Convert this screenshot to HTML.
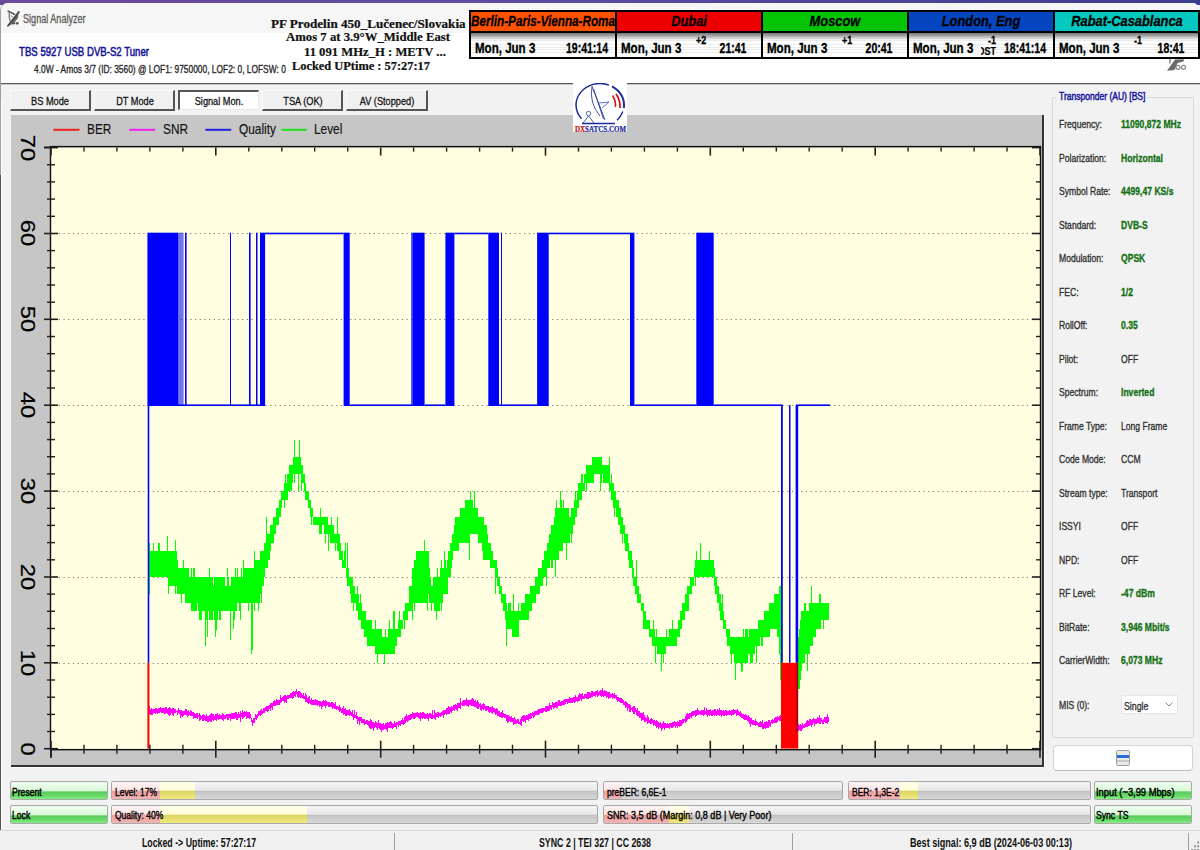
<!DOCTYPE html><html><head><meta charset="utf-8"><style>
html,body{margin:0;padding:0;width:1200px;height:850px;overflow:hidden;background:#f2f2f2;}
body{position:relative;font-family:"Liberation Sans",sans-serif;}
.t{position:absolute;white-space:nowrap;transform-origin:0 0;line-height:1;}
.a{position:absolute;}
</style></head><body>
<div class="a" style="left:0;top:0;width:1200px;height:5px;background:linear-gradient(90deg,#6c4a9a 0%,#5a4aa0 50%,#3c3c8e 100%)"></div>
<div class="a" style="left:0;top:3px;width:1200px;height:847px;background:#f2f2f2;border-top-left-radius:8px;border-top-right-radius:8px;overflow:hidden;border-left:1px solid #a0a0a0;box-sizing:border-box">
<div class="a" style="left:0;top:0;width:1200px;height:30px;background:#f6f6f6"></div>
<div class="a" style="left:0;top:30px;width:1200px;height:50px;background:#ffffff"></div>
<div class="a" style="left:0;top:80px;width:1200px;height:1px;background:#5a5a5a"></div>
<div class="a" style="left:0;top:81px;width:1200px;height:1px;background:#c8c8c8"></div>
</div>
<div class="a" style="left:0;top:175px;width:1px;height:675px;background:#505050"></div>
<div class="a" style="left:1px;top:100px;width:1px;height:750px;background:#ffffff"></div>
<svg class="a" style="left:4px;top:7px" width="20" height="22" viewBox="0 0 20 22">
<path d="M4.2 4.2 L10.5 7.2" stroke="#555" stroke-width="1.6" fill="none" stroke-linecap="round"/>
<path d="M5.2 6 Q5 10 6 14" stroke="#777" stroke-width="1.3" fill="none"/>
<path d="M7 8.5 L9 10.5" stroke="#666" stroke-width="1" fill="none"/>
<path d="M4.5 18.5 L14.8 5.2 L14 11 L9.5 17 Z" fill="#6a6a6a"/>
<path d="M4 18.8 L14.8 5" stroke="#444" stroke-width="1.8" fill="none" stroke-linecap="round"/>
<circle cx="9.8" cy="16.3" r="1.3" fill="#555"/>
<circle cx="13.2" cy="16.3" r="1.4" fill="#555"/>
</svg>
<div class="t" style="left:23px;top:12.5px;font-size:12px;color:#5f5f5f;font-weight:normal;font-style:normal;font-family:'Liberation Sans', sans-serif;transform:scaleX(0.757);-webkit-text-stroke:0.33px #5f5f5f;">Signal Analyzer</div>
<div class="t" style="left:18.5px;top:46.3px;font-size:12.5px;color:#14149a;font-weight:normal;font-style:normal;font-family:'Liberation Sans', sans-serif;transform:scaleX(0.77);-webkit-text-stroke:0.55px #14149a;">TBS 5927 USB DVB-S2 Tuner</div>
<div class="t" style="left:33.5px;top:63.5px;font-size:11.2px;color:#2a2a2a;font-weight:normal;font-style:normal;font-family:'Liberation Sans', sans-serif;transform:scaleX(0.75);-webkit-text-stroke:0.35px #2a2a2a;">4.0W - Amos 3/7 (ID: 3560) @ LOF1: 9750000, LOF2: 0, LOFSW: 0</div>
<div class="t" style="left:271.3px;top:18.7px;font-size:11.8px;font-weight:bold;font-family:'Liberation Serif', serif;color:#111;-webkit-text-stroke:0.2px #111;transform:scaleX(1.112)">PF Prodelin 450_Lučenec/Slovakia</div>
<div class="t" style="left:286.2px;top:32.4px;font-size:11.8px;font-weight:bold;font-family:'Liberation Serif', serif;color:#111;-webkit-text-stroke:0.2px #111;transform:scaleX(1.08)">Amos 7 at 3.9°W_Middle East</div>
<div class="t" style="left:303.5px;top:46.5px;font-size:11.8px;font-weight:bold;font-family:'Liberation Serif', serif;color:#111;-webkit-text-stroke:0.2px #111;transform:scaleX(1.073)">11 091 MHz_H : METV ...</div>
<div class="t" style="left:291.5px;top:60.8px;font-size:11.8px;font-weight:bold;font-family:'Liberation Serif', serif;color:#111;-webkit-text-stroke:0.2px #111;transform:scaleX(1.05)">Locked UPtime : 57:27:17</div>
<div class="a" style="left:469px;top:10px;width:731px;height:49px;background:#000"></div>
<div class="a" style="left:470.5px;top:12.3px;width:144px;height:19px;background:#ff5200"></div>
<div class="a" style="left:470.5px;top:33.3px;width:144px;height:24px;background:linear-gradient(#767676 0%,#a8a8a8 12%,#e8e8e8 26%,rgba(255,255,255,0) 32%),repeating-linear-gradient(#ffffff 0px,#ffffff 1.5px,#ebebeb 1.5px,#ebebeb 2.5px) 0 10px"></div>
<div class="t" style="left:543px;top:12.6px;font-size:15.5px;font-weight:bold;font-style:italic;color:#000;-webkit-text-stroke:0.3px #000;transform:translateX(-50%) scaleX(0.755);transform-origin:50% 0">Berlin-Paris-Vienna-Roma</div>
<div class="t" style="left:474.5px;top:39.8px;font-size:15.5px;font-weight:bold;color:#000;-webkit-text-stroke:0.35px #000;transform:scaleX(0.745)">Mon, Jun 3</div>
<div class="t" style="left:587px;top:39.8px;font-size:15.5px;font-weight:bold;color:#000;-webkit-text-stroke:0.35px #000;transform:translateX(-50%) scaleX(0.68);transform-origin:50% 0">19:41:14</div>
<div class="a" style="left:616.5px;top:12.3px;width:144px;height:19px;background:#ee0000"></div>
<div class="a" style="left:616.5px;top:33.3px;width:144px;height:24px;background:linear-gradient(#767676 0%,#a8a8a8 12%,#e8e8e8 26%,rgba(255,255,255,0) 32%),repeating-linear-gradient(#ffffff 0px,#ffffff 1.5px,#ebebeb 1.5px,#ebebeb 2.5px) 0 10px"></div>
<div class="t" style="left:689px;top:12.6px;font-size:15.5px;font-weight:bold;font-style:italic;color:#000;-webkit-text-stroke:0.3px #000;transform:translateX(-50%) scaleX(0.83);transform-origin:50% 0">Dubai</div>
<div class="t" style="left:620.5px;top:39.8px;font-size:15.5px;font-weight:bold;color:#000;-webkit-text-stroke:0.35px #000;transform:scaleX(0.745)">Mon, Jun 3</div>
<div class="t" style="left:733px;top:39.8px;font-size:15.5px;font-weight:bold;color:#000;-webkit-text-stroke:0.35px #000;transform:translateX(-50%) scaleX(0.68);transform-origin:50% 0">21:41</div>
<div class="t" style="left:695.5px;top:34.8px;font-size:11.5px;font-weight:bold;color:#000;-webkit-text-stroke:0.3px #000;transform:scaleX(0.78)">+2</div>
<div class="a" style="left:762.5px;top:12.3px;width:144px;height:19px;background:#05c405"></div>
<div class="a" style="left:762.5px;top:33.3px;width:144px;height:24px;background:linear-gradient(#767676 0%,#a8a8a8 12%,#e8e8e8 26%,rgba(255,255,255,0) 32%),repeating-linear-gradient(#ffffff 0px,#ffffff 1.5px,#ebebeb 1.5px,#ebebeb 2.5px) 0 10px"></div>
<div class="t" style="left:835px;top:12.6px;font-size:15.5px;font-weight:bold;font-style:italic;color:#000;-webkit-text-stroke:0.3px #000;transform:translateX(-50%) scaleX(0.83);transform-origin:50% 0">Moscow</div>
<div class="t" style="left:766.5px;top:39.8px;font-size:15.5px;font-weight:bold;color:#000;-webkit-text-stroke:0.35px #000;transform:scaleX(0.745)">Mon, Jun 3</div>
<div class="t" style="left:879px;top:39.8px;font-size:15.5px;font-weight:bold;color:#000;-webkit-text-stroke:0.35px #000;transform:translateX(-50%) scaleX(0.68);transform-origin:50% 0">20:41</div>
<div class="t" style="left:841.5px;top:34.8px;font-size:11.5px;font-weight:bold;color:#000;-webkit-text-stroke:0.3px #000;transform:scaleX(0.78)">+1</div>
<div class="a" style="left:908.5px;top:12.3px;width:144px;height:19px;background:#0545c0"></div>
<div class="a" style="left:908.5px;top:33.3px;width:144px;height:24px;background:linear-gradient(#767676 0%,#a8a8a8 12%,#e8e8e8 26%,rgba(255,255,255,0) 32%),repeating-linear-gradient(#ffffff 0px,#ffffff 1.5px,#ebebeb 1.5px,#ebebeb 2.5px) 0 10px"></div>
<div class="t" style="left:981px;top:12.6px;font-size:15.5px;font-weight:bold;font-style:italic;color:#000;-webkit-text-stroke:0.3px #000;transform:translateX(-50%) scaleX(0.83);transform-origin:50% 0">London, Eng</div>
<div class="t" style="left:912.5px;top:39.8px;font-size:15.5px;font-weight:bold;color:#000;-webkit-text-stroke:0.35px #000;transform:scaleX(0.745)">Mon, Jun 3</div>
<div class="t" style="left:1025px;top:39.8px;font-size:15.5px;font-weight:bold;color:#000;-webkit-text-stroke:0.35px #000;transform:translateX(-50%) scaleX(0.68);transform-origin:50% 0">18:41:14</div>
<div class="t" style="left:987.5px;top:34.8px;font-size:11.5px;font-weight:bold;color:#000;-webkit-text-stroke:0.3px #000;transform:scaleX(0.78)">-1</div>
<div class="a" style="left:1054.5px;top:12.3px;width:143px;height:19px;background:#05c8c0"></div>
<div class="a" style="left:1054.5px;top:33.3px;width:143px;height:24px;background:linear-gradient(#767676 0%,#a8a8a8 12%,#e8e8e8 26%,rgba(255,255,255,0) 32%),repeating-linear-gradient(#ffffff 0px,#ffffff 1.5px,#ebebeb 1.5px,#ebebeb 2.5px) 0 10px"></div>
<div class="t" style="left:1127px;top:12.6px;font-size:15.5px;font-weight:bold;font-style:italic;color:#000;-webkit-text-stroke:0.3px #000;transform:translateX(-50%) scaleX(0.83);transform-origin:50% 0">Rabat-Casablanca</div>
<div class="t" style="left:1058.5px;top:39.8px;font-size:15.5px;font-weight:bold;color:#000;-webkit-text-stroke:0.35px #000;transform:scaleX(0.745)">Mon, Jun 3</div>
<div class="t" style="left:1171px;top:39.8px;font-size:15.5px;font-weight:bold;color:#000;-webkit-text-stroke:0.35px #000;transform:translateX(-50%) scaleX(0.68);transform-origin:50% 0">18:41</div>
<div class="t" style="left:1133.5px;top:34.8px;font-size:11.5px;font-weight:bold;color:#000;-webkit-text-stroke:0.3px #000;transform:scaleX(0.78)">-1</div>
<div class="t" style="left:978px;top:45.8px;font-size:10.5px;font-weight:bold;color:#000;-webkit-text-stroke:0.2px #000;transform:scaleX(0.85)">DST</div>
<div class="a" style="left:975px;top:45px;width:5.5px;height:11px;background:#f8f8f8"></div>
<svg class="a" style="left:1160px;top:55px" width="35" height="20" viewBox="0 0 35 20">
<path d="M7 15.7 L15 4.5 L24 4.3 L23.5 6.5 L17.5 8 L14.5 15 Z" fill="#6a6a6a"/>
<circle cx="18" cy="12.3" r="2" fill="none" stroke="#8a8a8a" stroke-width="1.2"/>
<circle cx="23.5" cy="12.3" r="2" fill="none" stroke="#8a8a8a" stroke-width="1.2"/>
<line x1="10" y1="3.5" x2="10" y2="8.5" stroke="#666" stroke-width="1.2"/>
</svg>
<div class="a" style="left:9.5px;top:90px;width:81px;height:21px;background:#f0f0f0;box-sizing:border-box;border-top:1px solid #fafafa;border-left:1px solid #fafafa;border-right:2px solid #555;border-bottom:2px solid #555"></div>
<div class="t" style="left:50.0px;top:96.3px;font-size:11.8px;color:#111;-webkit-text-stroke:0.3px #111;transform:translateX(-50%) scaleX(0.78);transform-origin:50% 0">BS Mode</div>
<div class="a" style="left:94px;top:90px;width:81px;height:21px;background:#f0f0f0;box-sizing:border-box;border-top:1px solid #fafafa;border-left:1px solid #fafafa;border-right:2px solid #555;border-bottom:2px solid #555"></div>
<div class="t" style="left:134.5px;top:96.3px;font-size:11.8px;color:#111;-webkit-text-stroke:0.3px #111;transform:translateX(-50%) scaleX(0.78);transform-origin:50% 0">DT Mode</div>
<div class="a" style="left:178px;top:90px;width:81px;height:20px;background:#fff;box-sizing:border-box;border-top:2px solid #555;border-left:2px solid #555;border-right:1px solid #e8e8e8;border-bottom:1px solid #e8e8e8"></div>
<div class="t" style="left:218.5px;top:96.3px;font-size:11.8px;color:#111;-webkit-text-stroke:0.3px #111;transform:translateX(-50%) scaleX(0.78);transform-origin:50% 0">Signal Mon.</div>
<div class="a" style="left:262px;top:90px;width:81px;height:21px;background:#f0f0f0;box-sizing:border-box;border-top:1px solid #fafafa;border-left:1px solid #fafafa;border-right:2px solid #555;border-bottom:2px solid #555"></div>
<div class="t" style="left:302.5px;top:96.3px;font-size:11.8px;color:#111;-webkit-text-stroke:0.3px #111;transform:translateX(-50%) scaleX(0.78);transform-origin:50% 0">TSA (OK)</div>
<div class="a" style="left:346px;top:90px;width:82px;height:21px;background:#f0f0f0;box-sizing:border-box;border-top:1px solid #fafafa;border-left:1px solid #fafafa;border-right:2px solid #555;border-bottom:2px solid #555"></div>
<div class="t" style="left:387.0px;top:96.3px;font-size:11.8px;color:#111;-webkit-text-stroke:0.3px #111;transform:translateX(-50%) scaleX(0.78);transform-origin:50% 0">AV (Stopped)</div>
<div class="a" style="left:11px;top:115px;width:1033px;height:652px;background:#c6c6c6;box-sizing:border-box;border-right:2px solid #333;border-bottom:2px solid #333"></div>
<div class="a" style="left:1044px;top:115px;width:1px;height:653px;background:#fff"></div>
<div class="a" style="left:11px;top:767px;width:1034px;height:1px;background:#fff"></div>
<svg class="a" style="left:0;top:0" width="1200" height="850" viewBox="0 0 1200 850">
<rect x="51" y="147.6" width="989" height="601.1" fill="#fffee0"/>
<line x1="54" y1="663.5" x2="1040" y2="663.5" stroke="#7a7a70" stroke-width="1.1" stroke-dasharray="1.2 3.5"/>
<line x1="54" y1="577.5" x2="1040" y2="577.5" stroke="#7a7a70" stroke-width="1.1" stroke-dasharray="1.2 3.5"/>
<line x1="54" y1="491.5" x2="1040" y2="491.5" stroke="#7a7a70" stroke-width="1.1" stroke-dasharray="1.2 3.5"/>
<line x1="54" y1="405.5" x2="1040" y2="405.5" stroke="#7a7a70" stroke-width="1.1" stroke-dasharray="1.2 3.5"/>
<line x1="54" y1="319.5" x2="1040" y2="319.5" stroke="#7a7a70" stroke-width="1.1" stroke-dasharray="1.2 3.5"/>
<line x1="54" y1="233.5" x2="1040" y2="233.5" stroke="#7a7a70" stroke-width="1.1" stroke-dasharray="1.2 3.5"/>
<line x1="53.5" y1="129.8" x2="79.5" y2="129.8" stroke="#ee2020" stroke-width="2"/>
<line x1="129.3" y1="129.8" x2="155.2" y2="129.8" stroke="#f020f0" stroke-width="2"/>
<line x1="205.3" y1="129.8" x2="231.2" y2="129.8" stroke="#2020e0" stroke-width="2"/>
<line x1="281.3" y1="129.8" x2="306.7" y2="129.8" stroke="#20e020" stroke-width="2"/>
</svg>
<div class="t" style="left:86.7px;top:121.2px;font-size:15px;color:#111;font-weight:normal;font-style:normal;font-family:'Liberation Sans', sans-serif;transform:scaleX(0.79);-webkit-text-stroke:0.15px #111;">BER</div>
<div class="t" style="left:162.7px;top:121.2px;font-size:15px;color:#111;font-weight:normal;font-style:normal;font-family:'Liberation Sans', sans-serif;transform:scaleX(0.79);-webkit-text-stroke:0.15px #111;">SNR</div>
<div class="t" style="left:238.7px;top:121.2px;font-size:15px;color:#111;font-weight:normal;font-style:normal;font-family:'Liberation Sans', sans-serif;transform:scaleX(0.79);-webkit-text-stroke:0.15px #111;">Quality</div>
<div class="t" style="left:314px;top:121.2px;font-size:15px;color:#111;font-weight:normal;font-style:normal;font-family:'Liberation Sans', sans-serif;transform:scaleX(0.79);-webkit-text-stroke:0.15px #111;">Level</div>
<div class="t" style="left:27.2px;top:748.7px;font-size:19.5px;line-height:19.5px;color:#000;-webkit-text-stroke:0.2px #000;transform:translate(-50%,-50%) rotate(90deg) scaleX(1.22);transform-origin:50% 50%">0</div>
<div class="t" style="left:27.2px;top:662.8285714285714px;font-size:19.5px;line-height:19.5px;color:#000;-webkit-text-stroke:0.2px #000;transform:translate(-50%,-50%) rotate(90deg) scaleX(1.22);transform-origin:50% 50%">10</div>
<div class="t" style="left:27.2px;top:576.9571428571429px;font-size:19.5px;line-height:19.5px;color:#000;-webkit-text-stroke:0.2px #000;transform:translate(-50%,-50%) rotate(90deg) scaleX(1.22);transform-origin:50% 50%">20</div>
<div class="t" style="left:27.2px;top:491.08571428571435px;font-size:19.5px;line-height:19.5px;color:#000;-webkit-text-stroke:0.2px #000;transform:translate(-50%,-50%) rotate(90deg) scaleX(1.22);transform-origin:50% 50%">30</div>
<div class="t" style="left:27.2px;top:405.2142857142858px;font-size:19.5px;line-height:19.5px;color:#000;-webkit-text-stroke:0.2px #000;transform:translate(-50%,-50%) rotate(90deg) scaleX(1.22);transform-origin:50% 50%">40</div>
<div class="t" style="left:27.2px;top:319.3428571428572px;font-size:19.5px;line-height:19.5px;color:#000;-webkit-text-stroke:0.2px #000;transform:translate(-50%,-50%) rotate(90deg) scaleX(1.22);transform-origin:50% 50%">50</div>
<div class="t" style="left:27.2px;top:233.47142857142865px;font-size:19.5px;line-height:19.5px;color:#000;-webkit-text-stroke:0.2px #000;transform:translate(-50%,-50%) rotate(90deg) scaleX(1.22);transform-origin:50% 50%">60</div>
<div class="t" style="left:27.2px;top:147.60000000000002px;font-size:19.5px;line-height:19.5px;color:#000;-webkit-text-stroke:0.2px #000;transform:translate(-50%,-50%) rotate(90deg) scaleX(1.22);transform-origin:50% 50%">70</div>
<svg class="a" style="left:0;top:0" width="1200" height="850" viewBox="0 0 1200 850">
<clipPath id="pc"><rect x="52" y="148.6" width="988" height="600.1"/></clipPath><g clip-path="url(#pc)">
<path d="M148.5 551.2V577.0 M148.5 551.2V542.6 M149.5 551.2V577.0 M149.5 551.2V542.6 M149.5 577.0V594.1 M150.5 551.2V577.0 M151.5 551.2V577.0 M152.5 551.2V577.0 M153.5 551.2V577.0 M153.5 551.2V542.6 M154.5 551.2V577.0 M155.5 551.2V577.0 M156.5 551.2V577.0 M157.5 551.2V577.0 M158.5 542.6V577.0 M159.5 542.6V577.0 M160.5 551.2V577.0 M161.5 551.2V577.0 M162.5 551.2V577.0 M163.5 551.2V577.0 M164.5 551.2V577.0 M165.5 551.2V577.0 M166.5 551.2V577.0 M167.5 551.2V577.0 M168.5 551.2V577.0 M168.5 577.0V594.1 M169.5 551.2V585.5 M170.5 551.2V585.5 M171.5 551.2V585.5 M172.5 551.2V585.5 M173.5 551.2V585.5 M174.5 551.2V585.5 M175.5 551.2V585.5 M175.5 585.5V594.1 M176.5 551.2V585.5 M177.5 559.8V594.1 M178.5 568.4V594.1 M179.5 568.4V594.1 M180.5 568.4V594.1 M181.5 568.4V594.1 M181.5 594.1V602.7 M182.5 568.4V594.1 M183.5 568.4V594.1 M183.5 568.4V559.8 M184.5 568.4V594.1 M185.5 568.4V602.7 M186.5 568.4V602.7 M187.5 568.4V602.7 M188.5 568.4V602.7 M189.5 577.0V602.7 M190.5 577.0V602.7 M191.5 577.0V611.3 M191.5 577.0V568.4 M192.5 577.0V611.3 M193.5 568.4V611.3 M194.5 568.4V611.3 M195.5 577.0V611.3 M196.5 577.0V611.3 M197.5 577.0V602.7 M198.5 577.0V611.3 M199.5 577.0V619.9 M200.5 577.0V619.9 M201.5 577.0V619.9 M202.5 577.0V611.3 M203.5 577.0V611.3 M204.5 577.0V611.3 M205.5 577.0V619.9 M206.5 577.0V619.9 M207.5 577.0V619.9 M207.5 619.9V637.1 M208.5 577.0V611.3 M209.5 577.0V619.9 M209.5 577.0V568.4 M210.5 577.0V619.9 M211.5 577.0V619.9 M212.5 577.0V619.9 M213.5 585.5V611.3 M214.5 577.0V619.9 M215.5 577.0V619.9 M215.5 619.9V637.1 M216.5 577.0V619.9 M217.5 577.0V619.9 M218.5 577.0V611.3 M219.5 577.0V611.3 M219.5 611.3V619.9 M220.5 577.0V611.3 M220.5 611.3V619.9 M221.5 577.0V611.3 M222.5 577.0V611.3 M223.5 577.0V611.3 M224.5 577.0V611.3 M225.5 585.5V611.3 M226.5 585.5V611.3 M227.5 577.0V611.3 M227.5 577.0V568.4 M228.5 577.0V611.3 M229.5 585.5V611.3 M230.5 585.5V611.3 M231.5 577.0V611.3 M232.5 577.0V611.3 M233.5 577.0V611.3 M233.5 611.3V628.5 M234.5 577.0V611.3 M234.5 611.3V619.9 M235.5 577.0V611.3 M235.5 577.0V568.4 M236.5 577.0V611.3 M237.5 577.0V602.7 M237.5 577.0V568.4 M238.5 577.0V602.7 M239.5 577.0V611.3 M240.5 577.0V611.3 M240.5 611.3V619.9 M241.5 577.0V602.7 M241.5 577.0V568.4 M242.5 577.0V602.7 M243.5 577.0V602.7 M243.5 577.0V559.8 M244.5 568.4V602.7 M245.5 568.4V602.7 M246.5 568.4V602.7 M247.5 568.4V602.7 M248.5 568.4V602.7 M248.5 602.7V611.3 M249.5 568.4V602.7 M250.5 568.4V602.7 M251.5 568.4V602.7 M252.5 568.4V602.7 M253.5 568.4V602.7 M254.5 559.8V602.7 M254.5 559.8V551.2 M254.5 602.7V611.3 M255.5 559.8V602.7 M256.5 559.8V602.7 M257.5 559.8V602.7 M258.5 559.8V611.3 M259.5 559.8V602.7 M260.5 551.2V594.1 M261.5 551.2V594.1 M261.5 594.1V602.7 M262.5 551.2V585.5 M263.5 551.2V585.5 M264.5 542.6V577.0 M265.5 542.6V568.4 M266.5 534.0V568.4 M266.5 534.0V516.8 M267.5 534.0V568.4 M268.5 534.0V559.8 M269.5 534.0V559.8 M270.5 525.4V551.2 M271.5 525.4V542.6 M272.5 525.4V542.6 M273.5 516.8V542.6 M274.5 516.8V534.0 M275.5 516.8V534.0 M276.5 508.3V525.4 M277.5 508.3V525.4 M278.5 508.3V525.4 M279.5 499.7V516.8 M280.5 499.7V516.8 M281.5 491.1V508.3 M282.5 491.1V499.7 M283.5 491.1V499.7 M284.5 482.5V508.3 M285.5 473.9V499.7 M286.5 482.5V499.7 M287.5 473.9V499.7 M288.5 473.9V491.1 M289.5 465.3V491.1 M290.5 465.3V491.1 M291.5 465.3V482.5 M291.5 482.5V491.1 M292.5 465.3V482.5 M293.5 456.7V473.9 M294.5 456.7V482.5 M294.5 456.7V439.6 M295.5 456.7V473.9 M296.5 456.7V473.9 M297.5 456.7V473.9 M298.5 456.7V473.9 M298.5 473.9V491.1 M299.5 456.7V473.9 M299.5 456.7V439.6 M300.5 456.7V473.9 M301.5 465.3V482.5 M301.5 482.5V491.1 M302.5 465.3V482.5 M303.5 473.9V482.5 M304.5 473.9V491.1 M305.5 482.5V499.7 M306.5 491.1V499.7 M307.5 491.1V499.7 M308.5 491.1V508.3 M309.5 499.7V508.3 M310.5 499.7V516.8 M311.5 508.3V525.4 M312.5 508.3V516.8 M313.5 516.8V525.4 M314.5 516.8V525.4 M315.5 516.8V525.4 M316.5 516.8V525.4 M317.5 516.8V525.4 M318.5 516.8V525.4 M319.5 516.8V534.0 M320.5 516.8V534.0 M320.5 516.8V508.3 M321.5 516.8V534.0 M322.5 516.8V525.4 M323.5 516.8V525.4 M324.5 516.8V534.0 M325.5 516.8V534.0 M325.5 534.0V542.6 M326.5 516.8V534.0 M327.5 516.8V534.0 M328.5 525.4V534.0 M328.5 534.0V551.2 M329.5 525.4V534.0 M330.5 525.4V542.6 M331.5 525.4V542.6 M331.5 525.4V516.8 M332.5 525.4V542.6 M333.5 525.4V542.6 M334.5 534.0V542.6 M335.5 534.0V551.2 M336.5 534.0V542.6 M337.5 534.0V551.2 M337.5 534.0V516.8 M338.5 534.0V551.2 M339.5 534.0V551.2 M339.5 551.2V559.8 M340.5 542.6V559.8 M341.5 551.2V559.8 M342.5 551.2V559.8 M342.5 559.8V568.4 M343.5 559.8V568.4 M344.5 551.2V568.4 M345.5 559.8V568.4 M345.5 559.8V542.6 M346.5 568.4V577.0 M347.5 559.8V585.5 M347.5 559.8V542.6 M348.5 568.4V585.5 M349.5 577.0V585.5 M350.5 577.0V594.1 M351.5 577.0V594.1 M351.5 594.1V602.7 M352.5 577.0V602.7 M353.5 585.5V602.7 M353.5 602.7V611.3 M354.5 585.5V602.7 M355.5 594.1V602.7 M356.5 594.1V611.3 M357.5 594.1V611.3 M357.5 594.1V585.5 M358.5 594.1V619.9 M359.5 602.7V619.9 M360.5 602.7V619.9 M360.5 602.7V594.1 M361.5 602.7V628.5 M362.5 611.3V628.5 M363.5 611.3V628.5 M364.5 611.3V637.1 M365.5 611.3V637.1 M366.5 619.9V637.1 M367.5 619.9V645.7 M368.5 619.9V645.7 M369.5 619.9V645.7 M370.5 619.9V645.7 M371.5 619.9V645.7 M372.5 628.5V645.7 M373.5 628.5V645.7 M374.5 628.5V645.7 M375.5 619.9V654.2 M376.5 628.5V654.2 M377.5 628.5V654.2 M377.5 654.2V662.8 M378.5 628.5V654.2 M379.5 628.5V654.2 M380.5 628.5V654.2 M381.5 628.5V654.2 M382.5 637.1V654.2 M383.5 637.1V654.2 M384.5 637.1V654.2 M385.5 637.1V654.2 M385.5 637.1V628.5 M386.5 637.1V654.2 M387.5 637.1V654.2 M388.5 628.5V654.2 M389.5 628.5V654.2 M389.5 628.5V619.9 M390.5 628.5V654.2 M391.5 628.5V654.2 M392.5 628.5V654.2 M393.5 628.5V654.2 M393.5 628.5V611.3 M394.5 628.5V654.2 M394.5 628.5V611.3 M395.5 628.5V645.7 M396.5 628.5V645.7 M397.5 628.5V637.1 M398.5 619.9V637.1 M399.5 619.9V637.1 M399.5 619.9V611.3 M400.5 619.9V637.1 M401.5 619.9V628.5 M402.5 619.9V628.5 M403.5 611.3V619.9 M404.5 611.3V628.5 M405.5 602.7V619.9 M406.5 602.7V619.9 M407.5 602.7V611.3 M407.5 611.3V619.9 M408.5 602.7V611.3 M409.5 594.1V611.3 M409.5 594.1V585.5 M410.5 585.5V611.3 M411.5 585.5V611.3 M412.5 568.4V611.3 M412.5 611.3V619.9 M413.5 568.4V602.7 M414.5 559.8V611.3 M415.5 559.8V602.7 M416.5 551.2V602.7 M417.5 551.2V602.7 M418.5 551.2V602.7 M419.5 551.2V602.7 M420.5 551.2V602.7 M421.5 551.2V602.7 M422.5 551.2V602.7 M423.5 551.2V602.7 M424.5 551.2V602.7 M425.5 551.2V602.7 M426.5 551.2V602.7 M427.5 551.2V602.7 M427.5 602.7V611.3 M428.5 551.2V594.1 M429.5 568.4V594.1 M429.5 594.1V602.7 M430.5 577.0V602.7 M431.5 585.5V602.7 M431.5 602.7V611.3 M432.5 585.5V602.7 M433.5 577.0V602.7 M434.5 577.0V611.3 M435.5 577.0V611.3 M436.5 577.0V611.3 M436.5 611.3V619.9 M437.5 577.0V611.3 M437.5 577.0V568.4 M438.5 577.0V611.3 M439.5 577.0V602.7 M439.5 602.7V611.3 M440.5 568.4V602.7 M441.5 568.4V602.7 M441.5 568.4V559.8 M441.5 602.7V611.3 M442.5 568.4V602.7 M443.5 568.4V594.1 M444.5 568.4V594.1 M444.5 568.4V551.2 M445.5 559.8V594.1 M446.5 568.4V594.1 M447.5 559.8V594.1 M448.5 551.2V577.0 M449.5 551.2V577.0 M450.5 542.6V577.0 M451.5 542.6V568.4 M452.5 534.0V559.8 M453.5 534.0V551.2 M454.5 525.4V551.2 M455.5 516.8V551.2 M456.5 516.8V551.2 M457.5 516.8V551.2 M458.5 516.8V551.2 M459.5 516.8V542.6 M460.5 516.8V542.6 M460.5 516.8V508.3 M461.5 508.3V542.6 M462.5 508.3V542.6 M463.5 508.3V542.6 M464.5 508.3V542.6 M465.5 499.7V542.6 M466.5 499.7V542.6 M467.5 499.7V542.6 M468.5 499.7V542.6 M469.5 499.7V542.6 M469.5 542.6V559.8 M470.5 499.7V534.0 M470.5 499.7V491.1 M471.5 499.7V534.0 M472.5 499.7V534.0 M473.5 508.3V534.0 M474.5 508.3V534.0 M474.5 508.3V491.1 M475.5 508.3V534.0 M476.5 508.3V534.0 M477.5 508.3V534.0 M478.5 516.8V542.6 M479.5 516.8V542.6 M480.5 516.8V542.6 M481.5 516.8V542.6 M482.5 516.8V551.2 M483.5 516.8V559.8 M484.5 525.4V551.2 M484.5 551.2V559.8 M485.5 525.4V559.8 M486.5 525.4V559.8 M487.5 534.0V559.8 M488.5 542.6V559.8 M489.5 542.6V559.8 M490.5 542.6V568.4 M491.5 551.2V568.4 M492.5 551.2V568.4 M493.5 559.8V568.4 M494.5 559.8V568.4 M495.5 559.8V577.0 M495.5 577.0V594.1 M496.5 559.8V577.0 M497.5 568.4V585.5 M498.5 577.0V585.5 M499.5 577.0V594.1 M500.5 585.5V594.1 M501.5 585.5V602.7 M502.5 594.1V602.7 M503.5 594.1V611.3 M504.5 594.1V611.3 M505.5 594.1V619.9 M506.5 602.7V628.5 M506.5 628.5V645.7 M507.5 611.3V628.5 M508.5 602.7V628.5 M509.5 602.7V628.5 M510.5 602.7V628.5 M511.5 611.3V628.5 M512.5 611.3V637.1 M513.5 611.3V637.1 M513.5 611.3V594.1 M514.5 611.3V637.1 M515.5 611.3V637.1 M516.5 611.3V637.1 M517.5 611.3V637.1 M518.5 611.3V637.1 M518.5 611.3V602.7 M519.5 611.3V619.9 M520.5 611.3V619.9 M521.5 602.7V619.9 M522.5 602.7V619.9 M523.5 602.7V619.9 M524.5 602.7V619.9 M525.5 594.1V619.9 M526.5 594.1V619.9 M527.5 594.1V619.9 M528.5 594.1V619.9 M529.5 594.1V611.3 M530.5 594.1V611.3 M530.5 594.1V585.5 M531.5 585.5V611.3 M532.5 585.5V602.7 M533.5 585.5V602.7 M534.5 585.5V602.7 M535.5 577.0V602.7 M536.5 577.0V594.1 M537.5 577.0V594.1 M538.5 568.4V594.1 M539.5 568.4V594.1 M540.5 568.4V585.5 M541.5 568.4V585.5 M542.5 559.8V585.5 M543.5 559.8V577.0 M544.5 551.2V577.0 M545.5 551.2V577.0 M546.5 551.2V568.4 M546.5 568.4V585.5 M547.5 542.6V568.4 M548.5 542.6V568.4 M549.5 534.0V559.8 M549.5 559.8V568.4 M550.5 534.0V559.8 M551.5 525.4V568.4 M552.5 525.4V568.4 M553.5 525.4V559.8 M554.5 516.8V559.8 M555.5 508.3V559.8 M555.5 559.8V577.0 M556.5 508.3V559.8 M557.5 508.3V559.8 M558.5 508.3V559.8 M559.5 508.3V551.2 M560.5 508.3V551.2 M560.5 508.3V491.1 M561.5 508.3V551.2 M561.5 508.3V499.7 M562.5 508.3V551.2 M563.5 508.3V542.6 M563.5 508.3V499.7 M564.5 508.3V542.6 M565.5 508.3V542.6 M566.5 508.3V542.6 M566.5 542.6V559.8 M567.5 508.3V542.6 M568.5 508.3V542.6 M569.5 516.8V534.0 M569.5 534.0V542.6 M570.5 516.8V534.0 M571.5 508.3V534.0 M571.5 534.0V542.6 M572.5 508.3V534.0 M573.5 508.3V525.4 M574.5 499.7V516.8 M574.5 516.8V525.4 M575.5 499.7V516.8 M575.5 499.7V491.1 M576.5 499.7V516.8 M577.5 491.1V508.3 M578.5 491.1V508.3 M578.5 491.1V482.5 M579.5 482.5V499.7 M580.5 482.5V499.7 M581.5 473.9V499.7 M582.5 473.9V491.1 M583.5 482.5V491.1 M584.5 473.9V491.1 M585.5 473.9V482.5 M586.5 465.3V491.1 M587.5 465.3V482.5 M588.5 465.3V482.5 M589.5 465.3V482.5 M590.5 465.3V482.5 M591.5 465.3V482.5 M592.5 456.7V482.5 M593.5 456.7V482.5 M594.5 456.7V473.9 M595.5 456.7V473.9 M596.5 456.7V473.9 M597.5 456.7V473.9 M598.5 456.7V473.9 M599.5 456.7V473.9 M600.5 456.7V473.9 M600.5 473.9V491.1 M601.5 456.7V482.5 M602.5 465.3V473.9 M603.5 465.3V473.9 M603.5 473.9V482.5 M604.5 465.3V482.5 M605.5 465.3V482.5 M606.5 465.3V482.5 M607.5 465.3V482.5 M608.5 465.3V482.5 M609.5 473.9V491.1 M609.5 473.9V456.7 M610.5 482.5V491.1 M611.5 473.9V499.7 M612.5 482.5V499.7 M613.5 482.5V508.3 M614.5 491.1V508.3 M614.5 508.3V516.8 M615.5 491.1V508.3 M616.5 499.7V516.8 M617.5 499.7V516.8 M618.5 499.7V525.4 M619.5 508.3V525.4 M620.5 508.3V534.0 M621.5 516.8V534.0 M622.5 525.4V542.6 M622.5 525.4V516.8 M623.5 525.4V534.0 M624.5 525.4V542.6 M625.5 534.0V551.2 M626.5 534.0V551.2 M627.5 534.0V551.2 M628.5 542.6V559.8 M629.5 551.2V568.4 M630.5 551.2V568.4 M631.5 551.2V568.4 M632.5 559.8V577.0 M633.5 568.4V585.5 M634.5 577.0V585.5 M635.5 577.0V594.1 M636.5 577.0V594.1 M636.5 577.0V559.8 M637.5 585.5V602.7 M638.5 585.5V602.7 M639.5 594.1V602.7 M640.5 594.1V602.7 M641.5 602.7V611.3 M642.5 602.7V611.3 M643.5 602.7V619.9 M643.5 619.9V628.5 M644.5 611.3V628.5 M645.5 611.3V628.5 M646.5 619.9V628.5 M647.5 619.9V628.5 M648.5 619.9V628.5 M649.5 619.9V637.1 M650.5 628.5V637.1 M651.5 628.5V637.1 M652.5 628.5V645.7 M653.5 628.5V645.7 M653.5 628.5V619.9 M654.5 628.5V645.7 M655.5 637.1V645.7 M655.5 645.7V662.8 M656.5 628.5V645.7 M657.5 637.1V654.2 M658.5 637.1V654.2 M659.5 637.1V654.2 M660.5 637.1V654.2 M661.5 637.1V654.2 M661.5 654.2V671.4 M662.5 637.1V654.2 M663.5 637.1V654.2 M663.5 654.2V662.8 M664.5 637.1V654.2 M665.5 637.1V654.2 M666.5 637.1V645.7 M666.5 637.1V628.5 M667.5 637.1V645.7 M668.5 637.1V645.7 M669.5 628.5V645.7 M670.5 628.5V645.7 M671.5 628.5V645.7 M672.5 628.5V645.7 M672.5 628.5V619.9 M673.5 628.5V645.7 M674.5 628.5V645.7 M675.5 628.5V645.7 M676.5 628.5V637.1 M676.5 637.1V645.7 M677.5 628.5V637.1 M678.5 619.9V637.1 M679.5 619.9V637.1 M680.5 611.3V628.5 M681.5 611.3V628.5 M682.5 602.7V619.9 M683.5 602.7V619.9 M684.5 602.7V619.9 M685.5 594.1V611.3 M686.5 594.1V611.3 M687.5 585.5V611.3 M688.5 585.5V602.7 M688.5 602.7V611.3 M689.5 585.5V594.1 M690.5 577.0V594.1 M691.5 577.0V594.1 M692.5 577.0V585.5 M693.5 577.0V585.5 M694.5 568.4V577.0 M695.5 559.8V585.5 M696.5 551.2V577.0 M697.5 559.8V577.0 M698.5 559.8V577.0 M699.5 559.8V577.0 M700.5 559.8V577.0 M700.5 559.8V542.6 M701.5 559.8V577.0 M702.5 559.8V577.0 M703.5 559.8V577.0 M704.5 559.8V577.0 M705.5 559.8V577.0 M706.5 559.8V577.0 M707.5 559.8V577.0 M708.5 559.8V577.0 M709.5 559.8V577.0 M709.5 559.8V551.2 M710.5 559.8V577.0 M711.5 559.8V577.0 M712.5 559.8V577.0 M713.5 559.8V577.0 M714.5 568.4V585.5 M715.5 577.0V594.1 M716.5 577.0V594.1 M717.5 585.5V602.7 M718.5 585.5V602.7 M719.5 594.1V611.3 M720.5 594.1V619.9 M721.5 602.7V619.9 M722.5 602.7V619.9 M722.5 602.7V594.1 M723.5 611.3V628.5 M724.5 619.9V628.5 M725.5 619.9V628.5 M726.5 628.5V637.1 M727.5 628.5V645.7 M728.5 628.5V645.7 M729.5 628.5V645.7 M730.5 637.1V654.2 M731.5 637.1V654.2 M731.5 654.2V662.8 M732.5 637.1V654.2 M733.5 637.1V654.2 M734.5 637.1V662.8 M735.5 637.1V662.8 M735.5 662.8V680.0 M736.5 637.1V662.8 M737.5 637.1V662.8 M738.5 637.1V662.8 M739.5 637.1V662.8 M740.5 637.1V662.8 M741.5 637.1V662.8 M742.5 637.1V662.8 M742.5 662.8V671.4 M743.5 628.5V662.8 M744.5 637.1V662.8 M745.5 637.1V662.8 M745.5 637.1V628.5 M746.5 628.5V662.8 M747.5 628.5V662.8 M748.5 637.1V654.2 M749.5 628.5V654.2 M750.5 628.5V662.8 M751.5 628.5V662.8 M752.5 628.5V662.8 M753.5 628.5V654.2 M754.5 628.5V654.2 M755.5 628.5V645.7 M756.5 628.5V654.2 M756.5 654.2V662.8 M757.5 628.5V645.7 M758.5 619.9V645.7 M759.5 619.9V645.7 M760.5 619.9V637.1 M761.5 619.9V645.7 M762.5 619.9V645.7 M763.5 619.9V637.1 M764.5 611.3V637.1 M765.5 611.3V637.1 M766.5 611.3V637.1 M767.5 611.3V637.1 M768.5 611.3V637.1 M769.5 602.7V637.1 M770.5 602.7V628.5 M771.5 602.7V628.5 M772.5 602.7V628.5 M773.5 602.7V628.5 M774.5 594.1V628.5 M775.5 594.1V628.5 M776.5 594.1V628.5 M777.5 594.1V628.5 M777.5 628.5V637.1 M778.5 594.1V637.1 M779.5 585.5V654.2 M780.5 585.5V680.0 M798.5 637.1V688.6 M799.5 628.5V688.6 M800.5 619.9V680.0 M801.5 611.3V671.4 M802.5 611.3V662.8 M803.5 611.3V662.8 M804.5 602.7V662.8 M805.5 602.7V654.2 M806.5 611.3V654.2 M807.5 611.3V654.2 M807.5 654.2V671.4 M808.5 611.3V645.7 M808.5 645.7V654.2 M809.5 602.7V654.2 M810.5 602.7V645.7 M811.5 602.7V645.7 M811.5 602.7V585.5 M812.5 602.7V645.7 M813.5 602.7V637.1 M814.5 602.7V637.1 M815.5 602.7V637.1 M816.5 602.7V628.5 M817.5 602.7V628.5 M818.5 602.7V628.5 M819.5 594.1V628.5 M820.5 594.1V628.5 M821.5 602.7V619.9 M822.5 602.7V619.9 M823.5 602.7V619.9 M823.5 619.9V628.5 M824.5 602.7V619.9 M825.5 602.7V619.9 M826.5 602.7V619.9 M827.5 602.7V619.9 M828.5 602.7V619.9 M205.5 610V646 M251.5 590V654 M252.5 600V650 M384.5 640V664 M741.5 650V672 M175.5 540V551 M167.5 536V551 M424.5 540V551 M556.5 500V510 M216.5 600V630 M230.5 600V640" stroke="#00ff00" stroke-width="1" shape-rendering="crispEdges"/>
<path d="M148.5 710.6V716.0 M149.5 706.4V714.4 M150.5 709.3V715.2 M151.5 708.0V715.0 M152.5 709.3V714.5 M153.5 708.6V712.8 M154.5 709.1V713.0 M155.5 708.1V714.0 M156.5 708.3V712.9 M157.5 708.9V714.4 M158.5 708.2V712.8 M159.5 707.9V712.9 M160.5 707.4V712.3 M161.5 707.8V713.3 M162.5 707.6V713.0 M163.5 708.2V712.7 M164.5 707.9V713.7 M165.5 707.2V713.8 M166.5 707.3V713.1 M167.5 708.6V713.6 M168.5 708.0V715.3 M169.5 706.8V716.1 M170.5 707.9V714.7 M171.5 708.5V712.8 M172.5 708.2V714.5 M173.5 708.4V715.6 M174.5 708.5V712.9 M175.5 709.1V712.8 M176.5 710.5V711.8 M177.5 710.0V715.2 M178.5 708.3V713.2 M179.5 709.6V714.2 M180.5 709.9V718.1 M181.5 710.4V715.8 M182.5 711.1V717.4 M183.5 711.1V715.6 M184.5 710.5V715.3 M185.5 709.3V715.0 M186.5 708.6V715.3 M187.5 711.4V716.9 M188.5 710.3V715.8 M189.5 711.5V715.1 M190.5 710.1V716.1 M191.5 711.0V716.2 M192.5 711.5V716.1 M193.5 712.1V718.7 M194.5 712.5V718.3 M195.5 713.6V718.2 M196.5 712.6V718.2 M197.5 712.8V719.0 M198.5 715.1V717.4 M199.5 712.6V720.8 M200.5 714.6V719.7 M201.5 715.6V719.4 M202.5 714.5V720.6 M203.5 714.4V721.2 M204.5 714.5V719.5 M205.5 715.9V721.0 M206.5 713.5V721.1 M207.5 716.0V722.2 M208.5 716.4V722.4 M209.5 714.9V720.6 M210.5 714.0V721.6 M211.5 713.4V721.5 M212.5 713.8V720.0 M213.5 714.1V721.1 M214.5 715.6V719.7 M215.5 714.4V720.1 M216.5 714.1V721.4 M217.5 713.4V719.2 M218.5 715.2V720.4 M219.5 714.3V719.1 M220.5 714.7V719.4 M221.5 714.9V719.4 M222.5 713.1V720.4 M223.5 713.5V720.9 M224.5 714.8V719.2 M225.5 715.2V719.4 M226.5 714.4V718.1 M227.5 714.1V719.7 M228.5 713.5V719.6 M229.5 713.6V717.8 M230.5 713.6V720.8 M231.5 713.3V718.9 M232.5 712.7V719.1 M233.5 712.6V718.5 M234.5 712.8V718.5 M235.5 712.1V717.9 M236.5 711.7V719.8 M237.5 713.8V719.7 M238.5 711.8V717.9 M239.5 714.4V717.7 M240.5 710.6V721.6 M241.5 712.9V716.5 M242.5 709.6V719.0 M243.5 711.8V718.2 M244.5 711.2V717.0 M245.5 712.0V716.1 M246.5 711.1V718.5 M247.5 711.5V717.7 M248.5 712.1V718.1 M249.5 712.3V719.2 M250.5 713.8V717.8 M251.5 717.5V721.5 M252.5 719.8V725.8 M253.5 717.8V722.5 M254.5 717.9V722.7 M255.5 714.2V718.5 M256.5 714.6V720.3 M257.5 713.9V717.6 M258.5 710.6V715.9 M259.5 711.3V715.4 M260.5 709.8V715.9 M261.5 708.9V714.7 M262.5 710.5V714.0 M263.5 707.9V713.2 M264.5 707.9V713.0 M265.5 707.3V711.3 M266.5 705.9V710.6 M267.5 706.0V712.1 M268.5 705.8V710.7 M269.5 704.6V709.4 M270.5 702.9V710.8 M271.5 702.9V707.5 M272.5 702.5V709.8 M273.5 701.3V705.5 M274.5 700.3V705.5 M275.5 700.9V705.5 M276.5 698.6V705.1 M277.5 700.2V704.5 M278.5 700.2V705.3 M279.5 699.9V705.1 M280.5 695.0V703.2 M281.5 698.3V702.2 M282.5 697.0V700.5 M283.5 695.7V701.0 M284.5 694.9V703.0 M285.5 694.9V701.5 M286.5 696.3V703.1 M287.5 694.5V698.7 M288.5 694.7V699.1 M289.5 694.9V697.9 M290.5 693.4V698.1 M291.5 693.0V697.8 M292.5 692.4V699.4 M293.5 691.2V697.7 M294.5 692.2V696.4 M295.5 690.7V696.6 M296.5 688.8V694.3 M297.5 691.7V697.3 M298.5 691.2V697.5 M299.5 691.2V697.0 M300.5 692.2V697.8 M301.5 692.7V698.3 M302.5 695.1V698.4 M303.5 692.9V698.9 M304.5 696.0V699.4 M305.5 692.9V702.1 M306.5 695.3V701.5 M307.5 698.4V702.7 M308.5 696.8V704.4 M309.5 696.3V703.2 M310.5 699.9V704.1 M311.5 698.4V705.1 M312.5 700.4V705.3 M313.5 700.3V704.8 M314.5 700.0V705.0 M315.5 698.9V704.8 M316.5 699.6V704.9 M317.5 700.3V706.4 M318.5 700.6V705.3 M319.5 700.7V706.9 M320.5 700.7V705.7 M321.5 702.2V708.5 M322.5 700.7V707.4 M323.5 700.1V706.2 M324.5 700.9V706.2 M325.5 699.8V707.8 M326.5 701.4V706.3 M327.5 701.9V705.0 M328.5 702.3V707.1 M329.5 702.0V706.5 M330.5 703.3V707.4 M331.5 701.5V706.8 M332.5 701.9V709.0 M333.5 703.3V707.5 M334.5 703.8V709.4 M335.5 701.9V708.9 M336.5 706.2V710.2 M337.5 705.5V708.7 M338.5 706.6V709.8 M339.5 704.5V712.0 M340.5 706.9V711.1 M341.5 708.9V712.8 M342.5 708.0V713.4 M343.5 705.6V715.3 M344.5 708.7V713.7 M345.5 707.7V715.8 M346.5 709.6V715.9 M347.5 709.6V715.2 M348.5 710.0V714.5 M349.5 709.1V715.6 M350.5 710.7V715.3 M351.5 711.9V716.3 M352.5 710.3V717.1 M353.5 713.8V719.6 M354.5 710.3V718.1 M355.5 715.2V717.8 M356.5 712.0V719.2 M357.5 716.3V724.0 M358.5 717.0V721.3 M359.5 717.2V725.4 M360.5 716.6V721.4 M361.5 717.1V723.1 M362.5 718.9V722.8 M363.5 718.6V723.2 M364.5 718.9V724.9 M365.5 720.6V724.4 M366.5 719.8V723.7 M367.5 719.6V725.2 M368.5 720.6V726.1 M369.5 721.0V728.4 M370.5 719.1V728.9 M371.5 720.4V729.2 M372.5 722.4V727.8 M373.5 722.1V730.9 M374.5 722.8V728.3 M375.5 721.0V727.4 M376.5 721.9V728.2 M377.5 723.4V730.1 M378.5 719.7V727.7 M379.5 722.5V728.6 M380.5 722.6V729.9 M381.5 723.5V731.7 M382.5 723.9V729.6 M383.5 723.4V729.6 M384.5 724.7V729.3 M385.5 722.9V728.5 M386.5 723.0V730.4 M387.5 721.8V731.7 M388.5 723.0V728.4 M389.5 722.4V728.3 M390.5 721.3V728.2 M391.5 722.3V728.1 M392.5 723.2V728.6 M393.5 723.5V727.8 M394.5 721.3V726.9 M395.5 722.8V726.6 M396.5 721.7V728.5 M397.5 722.1V724.9 M398.5 720.9V726.8 M399.5 720.9V725.0 M400.5 720.7V726.1 M401.5 719.8V723.8 M402.5 718.2V724.3 M403.5 719.7V724.6 M404.5 716.7V723.7 M405.5 716.4V722.8 M406.5 714.0V721.3 M407.5 716.1V722.3 M408.5 715.1V721.0 M409.5 714.6V719.9 M410.5 713.8V719.9 M411.5 713.9V719.2 M412.5 711.8V718.3 M413.5 713.0V718.6 M414.5 712.9V718.9 M415.5 713.0V718.1 M416.5 712.6V717.4 M417.5 712.4V717.2 M418.5 713.3V718.0 M419.5 712.9V718.6 M420.5 712.4V721.1 M421.5 713.2V717.8 M422.5 711.9V718.5 M423.5 711.6V718.3 M424.5 713.3V718.5 M425.5 713.8V719.4 M426.5 713.7V717.8 M427.5 712.9V719.3 M428.5 714.4V721.0 M429.5 712.9V718.4 M430.5 712.7V718.4 M431.5 713.8V718.7 M432.5 710.3V718.9 M433.5 714.6V718.3 M434.5 710.3V719.1 M435.5 713.2V719.9 M436.5 713.0V716.9 M437.5 712.0V716.6 M438.5 711.8V718.3 M439.5 712.6V715.6 M440.5 712.5V717.2 M441.5 711.5V716.4 M442.5 710.6V714.5 M443.5 710.4V718.2 M444.5 710.4V714.9 M445.5 709.8V714.4 M446.5 708.0V714.9 M447.5 708.1V713.6 M448.5 706.3V713.7 M449.5 707.3V713.5 M450.5 706.5V712.4 M451.5 706.3V712.7 M452.5 707.3V710.9 M453.5 705.4V710.4 M454.5 704.9V711.4 M455.5 704.0V708.7 M456.5 704.5V710.3 M457.5 703.3V710.5 M458.5 702.7V708.2 M459.5 702.7V708.2 M460.5 698.1V709.0 M461.5 702.5V705.4 M462.5 701.4V706.4 M463.5 700.4V706.2 M464.5 700.4V705.7 M465.5 700.4V705.4 M466.5 697.5V705.8 M467.5 699.6V706.3 M468.5 699.6V707.4 M469.5 699.8V705.4 M470.5 700.0V704.8 M471.5 698.6V706.2 M472.5 698.1V705.8 M473.5 698.8V706.3 M474.5 700.7V706.7 M475.5 700.2V706.9 M476.5 701.6V707.7 M477.5 699.5V709.4 M478.5 702.3V708.7 M479.5 703.6V707.4 M480.5 703.2V709.7 M481.5 704.5V710.9 M482.5 703.6V709.4 M483.5 702.7V710.0 M484.5 703.5V709.3 M485.5 705.8V710.9 M486.5 705.7V710.6 M487.5 706.3V710.3 M488.5 705.6V711.5 M489.5 707.3V713.2 M490.5 706.5V711.7 M491.5 706.5V713.0 M492.5 705.7V714.3 M493.5 707.9V711.8 M494.5 707.8V712.6 M495.5 709.1V714.5 M496.5 708.3V713.8 M497.5 708.9V715.6 M498.5 710.8V715.7 M499.5 711.0V716.8 M500.5 712.8V717.3 M501.5 711.7V717.6 M502.5 710.0V717.7 M503.5 713.4V717.1 M504.5 713.5V718.3 M505.5 713.7V717.8 M506.5 715.4V720.6 M507.5 715.2V722.7 M508.5 715.3V721.6 M509.5 715.5V720.6 M510.5 716.5V721.9 M511.5 716.4V721.8 M512.5 717.7V721.5 M513.5 718.0V724.9 M514.5 716.9V724.3 M515.5 718.8V724.3 M516.5 720.3V724.0 M517.5 719.3V723.3 M518.5 719.0V724.0 M519.5 721.5V723.9 M520.5 718.7V724.5 M521.5 716.5V726.1 M522.5 716.1V721.4 M523.5 715.4V721.8 M524.5 714.9V721.1 M525.5 716.3V722.9 M526.5 715.1V719.6 M527.5 714.8V720.1 M528.5 713.8V721.3 M529.5 713.8V718.8 M530.5 712.6V718.5 M531.5 713.2V718.4 M532.5 711.8V716.2 M533.5 712.7V717.7 M534.5 711.0V717.0 M535.5 711.3V715.4 M536.5 710.8V715.2 M537.5 709.7V715.3 M538.5 708.9V715.4 M539.5 708.6V714.4 M540.5 708.6V712.9 M541.5 707.8V712.8 M542.5 708.2V713.3 M543.5 707.7V712.0 M544.5 707.8V711.3 M545.5 705.6V712.0 M546.5 706.2V711.6 M547.5 705.5V711.1 M548.5 705.5V711.4 M549.5 703.1V710.5 M550.5 705.4V709.4 M551.5 705.0V709.9 M552.5 701.8V707.3 M553.5 703.1V708.8 M554.5 703.0V707.5 M555.5 702.4V707.0 M556.5 701.9V707.7 M557.5 701.6V707.5 M558.5 700.3V705.9 M559.5 699.7V705.6 M560.5 701.6V705.8 M561.5 700.9V705.6 M562.5 700.6V704.6 M563.5 700.4V705.0 M564.5 698.6V704.8 M565.5 699.0V703.9 M566.5 699.2V702.3 M567.5 698.9V703.6 M568.5 699.0V703.2 M569.5 697.0V703.1 M570.5 698.2V702.7 M571.5 697.7V703.1 M572.5 698.1V702.9 M573.5 696.9V701.7 M574.5 696.9V703.1 M575.5 695.4V702.0 M576.5 696.9V701.1 M577.5 696.7V702.0 M578.5 694.5V701.1 M579.5 693.0V701.4 M580.5 694.3V699.4 M581.5 694.0V701.2 M582.5 693.3V699.4 M583.5 695.5V698.7 M584.5 693.8V698.8 M585.5 694.2V698.3 M586.5 693.6V699.4 M587.5 692.0V698.9 M588.5 692.4V699.0 M589.5 691.6V697.5 M590.5 693.0V697.7 M591.5 691.1V697.1 M592.5 691.0V696.5 M593.5 691.8V695.7 M594.5 691.5V696.0 M595.5 690.8V696.7 M596.5 691.1V695.3 M597.5 689.9V697.1 M598.5 691.5V695.5 M599.5 690.9V694.8 M600.5 690.1V696.0 M601.5 690.2V696.5 M602.5 688.3V696.0 M603.5 691.0V696.8 M604.5 689.6V695.7 M605.5 690.8V695.5 M606.5 691.0V697.9 M607.5 691.6V697.3 M608.5 691.7V699.0 M609.5 691.6V698.4 M610.5 693.8V697.9 M611.5 693.5V696.5 M612.5 693.4V698.5 M613.5 694.1V698.2 M614.5 693.0V699.1 M615.5 694.7V698.2 M616.5 695.2V700.4 M617.5 696.8V701.8 M618.5 696.9V701.0 M619.5 698.1V701.7 M620.5 698.1V703.0 M621.5 698.2V702.5 M622.5 699.1V702.9 M623.5 699.6V704.8 M624.5 702.1V704.5 M625.5 701.0V708.4 M626.5 701.9V707.1 M627.5 703.3V710.9 M628.5 703.8V707.7 M629.5 704.3V711.6 M630.5 704.5V711.5 M631.5 707.5V710.2 M632.5 706.8V712.3 M633.5 706.3V714.3 M634.5 706.3V713.6 M635.5 707.9V712.4 M636.5 709.5V715.0 M637.5 707.8V715.9 M638.5 710.5V716.4 M639.5 710.7V718.1 M640.5 713.1V718.3 M641.5 712.9V721.4 M642.5 713.3V719.7 M643.5 711.6V720.1 M644.5 715.1V721.9 M645.5 717.0V722.4 M646.5 718.0V721.3 M647.5 715.0V723.6 M648.5 716.9V722.8 M649.5 719.5V723.4 M650.5 719.3V723.8 M651.5 718.2V724.4 M652.5 719.4V723.2 M653.5 719.8V726.1 M654.5 719.5V725.4 M655.5 720.6V725.5 M656.5 720.4V727.8 M657.5 721.4V726.8 M658.5 722.1V729.1 M659.5 722.6V726.7 M660.5 722.0V727.8 M661.5 723.7V730.6 M662.5 722.8V728.9 M663.5 720.7V728.3 M664.5 723.1V729.6 M665.5 722.7V728.4 M666.5 724.1V727.8 M667.5 722.7V727.7 M668.5 724.0V728.2 M669.5 722.6V729.3 M670.5 723.1V727.4 M671.5 722.5V727.9 M672.5 721.9V728.0 M673.5 722.3V726.7 M674.5 721.3V725.7 M675.5 722.1V727.7 M676.5 721.7V725.9 M677.5 720.9V727.7 M678.5 722.3V726.3 M679.5 720.0V726.8 M680.5 720.3V726.1 M681.5 719.8V725.6 M682.5 718.5V724.1 M683.5 718.7V723.4 M684.5 718.7V721.1 M685.5 716.1V722.6 M686.5 714.0V722.2 M687.5 712.8V720.0 M688.5 714.2V718.6 M689.5 713.1V718.8 M690.5 712.9V716.9 M691.5 712.0V717.5 M692.5 711.0V716.0 M693.5 711.0V716.2 M694.5 710.6V714.7 M695.5 710.3V716.6 M696.5 709.8V716.0 M697.5 707.6V715.0 M698.5 709.5V715.3 M699.5 710.6V714.4 M700.5 710.6V714.8 M701.5 709.5V715.1 M702.5 710.0V715.4 M703.5 710.1V715.9 M704.5 706.9V715.3 M705.5 711.0V714.4 M706.5 708.0V714.9 M707.5 709.9V716.9 M708.5 709.7V714.9 M709.5 709.9V715.8 M710.5 709.4V715.1 M711.5 711.1V715.5 M712.5 710.0V716.3 M713.5 709.5V715.2 M714.5 709.0V716.3 M715.5 709.4V715.4 M716.5 711.2V716.4 M717.5 708.6V715.1 M718.5 710.2V714.9 M719.5 708.4V716.3 M720.5 710.4V714.9 M721.5 710.3V716.6 M722.5 710.9V714.5 M723.5 710.2V716.2 M724.5 710.6V716.4 M725.5 709.7V715.3 M726.5 709.6V715.6 M727.5 711.4V715.1 M728.5 711.3V715.0 M729.5 710.2V715.0 M730.5 711.4V715.0 M731.5 709.9V716.2 M732.5 710.1V714.9 M733.5 708.5V714.7 M734.5 710.0V714.3 M735.5 709.9V713.1 M736.5 709.7V716.2 M737.5 708.9V714.6 M738.5 711.2V715.2 M739.5 711.7V716.3 M740.5 711.2V716.6 M741.5 712.6V717.5 M742.5 713.9V717.9 M743.5 713.5V719.3 M744.5 714.8V720.0 M745.5 714.3V719.6 M746.5 714.5V719.7 M747.5 716.4V721.4 M748.5 715.1V722.0 M749.5 717.0V723.9 M750.5 718.0V727.2 M751.5 717.9V724.0 M752.5 719.8V725.0 M753.5 719.7V725.2 M754.5 721.0V724.9 M755.5 719.4V726.1 M756.5 720.6V724.7 M757.5 722.0V725.0 M758.5 722.9V726.6 M759.5 721.9V726.8 M760.5 721.1V726.5 M761.5 722.0V726.5 M762.5 719.8V728.5 M763.5 723.6V728.6 M764.5 721.7V728.1 M765.5 721.6V728.5 M766.5 721.3V727.7 M767.5 722.1V727.8 M768.5 719.9V727.5 M769.5 719.9V725.6 M770.5 722.0V726.7 M771.5 719.5V723.2 M772.5 718.7V724.0 M773.5 720.3V723.4 M774.5 718.2V723.2 M775.5 717.4V723.3 M776.5 717.0V723.0 M777.5 716.3V721.5 M778.5 717.1V720.4 M779.5 715.7V720.7 M780.5 714.9V721.4 M781.5 716.0V719.4 M782.5 717.0V719.8 M783.5 716.9V723.3 M784.5 713.4V722.3 M785.5 716.9V724.2 M786.5 718.4V723.9 M787.5 716.2V722.4 M788.5 720.0V725.8 M789.5 720.7V726.4 M790.5 723.1V726.4 M791.5 720.9V727.4 M792.5 723.0V728.0 M793.5 721.3V729.5 M794.5 724.3V728.7 M795.5 723.6V730.3 M796.5 725.6V729.4 M797.5 725.8V732.3 M798.5 723.6V731.4 M799.5 724.7V730.3 M800.5 724.3V730.5 M801.5 724.8V731.1 M802.5 722.5V729.4 M803.5 725.4V728.0 M804.5 724.0V728.2 M805.5 723.0V726.5 M806.5 721.3V727.2 M807.5 720.1V727.1 M808.5 721.2V725.9 M809.5 719.4V725.5 M810.5 719.1V724.5 M811.5 720.1V727.0 M812.5 719.2V724.8 M813.5 718.2V723.0 M814.5 719.0V725.7 M815.5 719.0V723.7 M816.5 718.6V723.7 M817.5 716.9V723.3 M818.5 717.6V722.8 M819.5 715.4V724.2 M820.5 718.3V723.9 M821.5 718.4V722.3 M822.5 720.3V724.4 M823.5 718.6V724.1 M824.5 717.4V721.7 M825.5 717.3V723.1 M826.5 716.7V723.3 M827.5 714.2V723.7 M828.5 716.7V722.1" stroke="#ff00ff" stroke-width="1" shape-rendering="crispEdges"/>
<rect x="147.4" y="232.67142857142863" width="31.0" height="173.34285714285713" fill="#0000ff" fill-opacity="1"/>
<rect x="178.4" y="232.67142857142863" width="5.199999999999989" height="173.34285714285713" fill="#0000ff" fill-opacity="0.55"/>
<rect x="185" y="232.67142857142863" width="1.5999999999999943" height="173.34285714285713" fill="#0000ff" fill-opacity="1"/>
<rect x="230" y="232.67142857142863" width="1" height="173.34285714285713" fill="#0000ff" fill-opacity="1"/>
<rect x="249" y="232.67142857142863" width="1.5999999999999943" height="173.34285714285713" fill="#0000ff" fill-opacity="1"/>
<rect x="256" y="232.67142857142863" width="1.5" height="173.34285714285713" fill="#0000ff" fill-opacity="1"/>
<rect x="260" y="232.67142857142863" width="5.100000000000023" height="173.34285714285713" fill="#0000ff" fill-opacity="1"/>
<rect x="343.6" y="232.67142857142863" width="6.099999999999966" height="173.34285714285713" fill="#0000ff" fill-opacity="1"/>
<rect x="411.2" y="232.67142857142863" width="1.0" height="173.34285714285713" fill="#0000ff" fill-opacity="0.8"/>
<rect x="412.3" y="232.67142857142863" width="12.300000000000011" height="173.34285714285713" fill="#0000ff" fill-opacity="1"/>
<rect x="445.4" y="232.67142857142863" width="9.0" height="173.34285714285713" fill="#0000ff" fill-opacity="1"/>
<rect x="488.3" y="232.67142857142863" width="10.699999999999989" height="173.34285714285713" fill="#0000ff" fill-opacity="1"/>
<rect x="501" y="232.67142857142863" width="1" height="173.34285714285713" fill="#0000ff" fill-opacity="1"/>
<rect x="537.1" y="232.67142857142863" width="11.600000000000023" height="173.34285714285713" fill="#0000ff" fill-opacity="1"/>
<rect x="630" y="232.67142857142863" width="4.399999999999977" height="173.34285714285713" fill="#0000ff" fill-opacity="1"/>
<rect x="696.3" y="232.67142857142863" width="17.40000000000009" height="173.34285714285713" fill="#0000ff" fill-opacity="1"/>
<rect x="265" y="232.67142857142863" width="78.60000000000002" height="1.6" fill="#0000ff"/>
<rect x="454.4" y="232.67142857142863" width="33.900000000000034" height="1.6" fill="#0000ff"/>
<rect x="548.7" y="232.67142857142863" width="81.29999999999995" height="1.6" fill="#0000ff"/>
<rect x="148" y="404.41428571428577" width="117" height="1.6" fill="#0000ff"/>
<rect x="349.7" y="404.41428571428577" width="62.30000000000001" height="1.6" fill="#0000ff"/>
<rect x="424.6" y="404.41428571428577" width="20.799999999999955" height="1.6" fill="#0000ff"/>
<rect x="499" y="404.41428571428577" width="38.10000000000002" height="1.6" fill="#0000ff"/>
<rect x="634.4" y="404.41428571428577" width="61.89999999999998" height="1.6" fill="#0000ff"/>
<rect x="713.7" y="404.41428571428577" width="69.09999999999991" height="1.6" fill="#0000ff"/>
<rect x="796" y="404.41428571428577" width="34" height="1.6" fill="#0000ff"/>
<rect x="147.7" y="405.2142857142858" width="1.6" height="257.61428571428564" fill="#0000ff"/>
<rect x="781" y="405.2142857142858" width="1.8" height="257.61428571428564" fill="#0000ff"/>
<rect x="789" y="405.2142857142858" width="1.5" height="257.61428571428564" fill="#0000ff"/>
<rect x="795.6" y="405.2142857142858" width="2.6" height="257.61428571428564" fill="#0000ff"/>
<rect x="147.4" y="662.8285714285714" width="2" height="85.87142857142862" fill="#ff0000"/>
<rect x="781" y="662.8285714285714" width="17.2" height="85.87142857142862" fill="#ff0000"/>
<rect x="796.6" y="662.8285714285714" width="1" height="68.69714285714292" fill="#600030"/>
</g>
<rect x="50.5" y="146.6" width="990" height="603.1" fill="none" stroke="#101010" stroke-width="1.4"/>
<line x1="51.0" y1="740.7" x2="51.0" y2="757.7" stroke="#202020" stroke-width="1.6"/>
<line x1="51.0" y1="147.6" x2="51.0" y2="155.6" stroke="#202020" stroke-width="1.6"/>
<line x1="84.0" y1="744.7" x2="84.0" y2="753.7" stroke="#202020" stroke-width="1.4"/>
<line x1="84.0" y1="147.6" x2="84.0" y2="151.6" stroke="#202020" stroke-width="1.4"/>
<line x1="116.9" y1="744.7" x2="116.9" y2="753.7" stroke="#202020" stroke-width="1.4"/>
<line x1="116.9" y1="147.6" x2="116.9" y2="151.6" stroke="#202020" stroke-width="1.4"/>
<line x1="149.9" y1="744.7" x2="149.9" y2="753.7" stroke="#202020" stroke-width="1.4"/>
<line x1="149.9" y1="147.6" x2="149.9" y2="151.6" stroke="#202020" stroke-width="1.4"/>
<line x1="182.9" y1="744.7" x2="182.9" y2="753.7" stroke="#202020" stroke-width="1.4"/>
<line x1="182.9" y1="147.6" x2="182.9" y2="151.6" stroke="#202020" stroke-width="1.4"/>
<line x1="215.8" y1="740.7" x2="215.8" y2="757.7" stroke="#202020" stroke-width="1.6"/>
<line x1="215.8" y1="147.6" x2="215.8" y2="155.6" stroke="#202020" stroke-width="1.6"/>
<line x1="248.8" y1="744.7" x2="248.8" y2="753.7" stroke="#202020" stroke-width="1.4"/>
<line x1="248.8" y1="147.6" x2="248.8" y2="151.6" stroke="#202020" stroke-width="1.4"/>
<line x1="281.8" y1="744.7" x2="281.8" y2="753.7" stroke="#202020" stroke-width="1.4"/>
<line x1="281.8" y1="147.6" x2="281.8" y2="151.6" stroke="#202020" stroke-width="1.4"/>
<line x1="314.7" y1="744.7" x2="314.7" y2="753.7" stroke="#202020" stroke-width="1.4"/>
<line x1="314.7" y1="147.6" x2="314.7" y2="151.6" stroke="#202020" stroke-width="1.4"/>
<line x1="347.7" y1="744.7" x2="347.7" y2="753.7" stroke="#202020" stroke-width="1.4"/>
<line x1="347.7" y1="147.6" x2="347.7" y2="151.6" stroke="#202020" stroke-width="1.4"/>
<line x1="380.7" y1="740.7" x2="380.7" y2="757.7" stroke="#202020" stroke-width="1.6"/>
<line x1="380.7" y1="147.6" x2="380.7" y2="155.6" stroke="#202020" stroke-width="1.6"/>
<line x1="413.6" y1="744.7" x2="413.6" y2="753.7" stroke="#202020" stroke-width="1.4"/>
<line x1="413.6" y1="147.6" x2="413.6" y2="151.6" stroke="#202020" stroke-width="1.4"/>
<line x1="446.6" y1="744.7" x2="446.6" y2="753.7" stroke="#202020" stroke-width="1.4"/>
<line x1="446.6" y1="147.6" x2="446.6" y2="151.6" stroke="#202020" stroke-width="1.4"/>
<line x1="479.6" y1="744.7" x2="479.6" y2="753.7" stroke="#202020" stroke-width="1.4"/>
<line x1="479.6" y1="147.6" x2="479.6" y2="151.6" stroke="#202020" stroke-width="1.4"/>
<line x1="512.5" y1="744.7" x2="512.5" y2="753.7" stroke="#202020" stroke-width="1.4"/>
<line x1="512.5" y1="147.6" x2="512.5" y2="151.6" stroke="#202020" stroke-width="1.4"/>
<line x1="545.5" y1="740.7" x2="545.5" y2="757.7" stroke="#202020" stroke-width="1.6"/>
<line x1="545.5" y1="147.6" x2="545.5" y2="155.6" stroke="#202020" stroke-width="1.6"/>
<line x1="578.5" y1="744.7" x2="578.5" y2="753.7" stroke="#202020" stroke-width="1.4"/>
<line x1="578.5" y1="147.6" x2="578.5" y2="151.6" stroke="#202020" stroke-width="1.4"/>
<line x1="611.4" y1="744.7" x2="611.4" y2="753.7" stroke="#202020" stroke-width="1.4"/>
<line x1="611.4" y1="147.6" x2="611.4" y2="151.6" stroke="#202020" stroke-width="1.4"/>
<line x1="644.4" y1="744.7" x2="644.4" y2="753.7" stroke="#202020" stroke-width="1.4"/>
<line x1="644.4" y1="147.6" x2="644.4" y2="151.6" stroke="#202020" stroke-width="1.4"/>
<line x1="677.4" y1="744.7" x2="677.4" y2="753.7" stroke="#202020" stroke-width="1.4"/>
<line x1="677.4" y1="147.6" x2="677.4" y2="151.6" stroke="#202020" stroke-width="1.4"/>
<line x1="710.3" y1="740.7" x2="710.3" y2="757.7" stroke="#202020" stroke-width="1.6"/>
<line x1="710.3" y1="147.6" x2="710.3" y2="155.6" stroke="#202020" stroke-width="1.6"/>
<line x1="743.3" y1="744.7" x2="743.3" y2="753.7" stroke="#202020" stroke-width="1.4"/>
<line x1="743.3" y1="147.6" x2="743.3" y2="151.6" stroke="#202020" stroke-width="1.4"/>
<line x1="776.3" y1="744.7" x2="776.3" y2="753.7" stroke="#202020" stroke-width="1.4"/>
<line x1="776.3" y1="147.6" x2="776.3" y2="151.6" stroke="#202020" stroke-width="1.4"/>
<line x1="809.2" y1="744.7" x2="809.2" y2="753.7" stroke="#202020" stroke-width="1.4"/>
<line x1="809.2" y1="147.6" x2="809.2" y2="151.6" stroke="#202020" stroke-width="1.4"/>
<line x1="842.2" y1="744.7" x2="842.2" y2="753.7" stroke="#202020" stroke-width="1.4"/>
<line x1="842.2" y1="147.6" x2="842.2" y2="151.6" stroke="#202020" stroke-width="1.4"/>
<line x1="875.2" y1="740.7" x2="875.2" y2="757.7" stroke="#202020" stroke-width="1.6"/>
<line x1="875.2" y1="147.6" x2="875.2" y2="155.6" stroke="#202020" stroke-width="1.6"/>
<line x1="908.1" y1="744.7" x2="908.1" y2="753.7" stroke="#202020" stroke-width="1.4"/>
<line x1="908.1" y1="147.6" x2="908.1" y2="151.6" stroke="#202020" stroke-width="1.4"/>
<line x1="941.1" y1="744.7" x2="941.1" y2="753.7" stroke="#202020" stroke-width="1.4"/>
<line x1="941.1" y1="147.6" x2="941.1" y2="151.6" stroke="#202020" stroke-width="1.4"/>
<line x1="974.1" y1="744.7" x2="974.1" y2="753.7" stroke="#202020" stroke-width="1.4"/>
<line x1="974.1" y1="147.6" x2="974.1" y2="151.6" stroke="#202020" stroke-width="1.4"/>
<line x1="1007.0" y1="744.7" x2="1007.0" y2="753.7" stroke="#202020" stroke-width="1.4"/>
<line x1="1007.0" y1="147.6" x2="1007.0" y2="151.6" stroke="#202020" stroke-width="1.4"/>
<line x1="1040.0" y1="740.7" x2="1040.0" y2="757.7" stroke="#202020" stroke-width="1.6"/>
<line x1="1040.0" y1="147.6" x2="1040.0" y2="155.6" stroke="#202020" stroke-width="1.6"/>
<line x1="44" y1="147.6" x2="58" y2="147.6" stroke="#202020" stroke-width="1.6"/>
<line x1="1032" y1="147.6" x2="1040" y2="147.6" stroke="#202020" stroke-width="1.6"/>
<line x1="47" y1="164.8" x2="55" y2="164.8" stroke="#202020" stroke-width="1.4"/>
<line x1="1036" y1="164.8" x2="1040" y2="164.8" stroke="#202020" stroke-width="1.4"/>
<line x1="47" y1="181.9" x2="55" y2="181.9" stroke="#202020" stroke-width="1.4"/>
<line x1="1036" y1="181.9" x2="1040" y2="181.9" stroke="#202020" stroke-width="1.4"/>
<line x1="47" y1="199.1" x2="55" y2="199.1" stroke="#202020" stroke-width="1.4"/>
<line x1="1036" y1="199.1" x2="1040" y2="199.1" stroke="#202020" stroke-width="1.4"/>
<line x1="47" y1="216.3" x2="55" y2="216.3" stroke="#202020" stroke-width="1.4"/>
<line x1="1036" y1="216.3" x2="1040" y2="216.3" stroke="#202020" stroke-width="1.4"/>
<line x1="44" y1="233.5" x2="58" y2="233.5" stroke="#202020" stroke-width="1.6"/>
<line x1="1032" y1="233.5" x2="1040" y2="233.5" stroke="#202020" stroke-width="1.6"/>
<line x1="47" y1="250.6" x2="55" y2="250.6" stroke="#202020" stroke-width="1.4"/>
<line x1="1036" y1="250.6" x2="1040" y2="250.6" stroke="#202020" stroke-width="1.4"/>
<line x1="47" y1="267.8" x2="55" y2="267.8" stroke="#202020" stroke-width="1.4"/>
<line x1="1036" y1="267.8" x2="1040" y2="267.8" stroke="#202020" stroke-width="1.4"/>
<line x1="47" y1="285.0" x2="55" y2="285.0" stroke="#202020" stroke-width="1.4"/>
<line x1="1036" y1="285.0" x2="1040" y2="285.0" stroke="#202020" stroke-width="1.4"/>
<line x1="47" y1="302.2" x2="55" y2="302.2" stroke="#202020" stroke-width="1.4"/>
<line x1="1036" y1="302.2" x2="1040" y2="302.2" stroke="#202020" stroke-width="1.4"/>
<line x1="44" y1="319.3" x2="58" y2="319.3" stroke="#202020" stroke-width="1.6"/>
<line x1="1032" y1="319.3" x2="1040" y2="319.3" stroke="#202020" stroke-width="1.6"/>
<line x1="47" y1="336.5" x2="55" y2="336.5" stroke="#202020" stroke-width="1.4"/>
<line x1="1036" y1="336.5" x2="1040" y2="336.5" stroke="#202020" stroke-width="1.4"/>
<line x1="47" y1="353.7" x2="55" y2="353.7" stroke="#202020" stroke-width="1.4"/>
<line x1="1036" y1="353.7" x2="1040" y2="353.7" stroke="#202020" stroke-width="1.4"/>
<line x1="47" y1="370.9" x2="55" y2="370.9" stroke="#202020" stroke-width="1.4"/>
<line x1="1036" y1="370.9" x2="1040" y2="370.9" stroke="#202020" stroke-width="1.4"/>
<line x1="47" y1="388.0" x2="55" y2="388.0" stroke="#202020" stroke-width="1.4"/>
<line x1="1036" y1="388.0" x2="1040" y2="388.0" stroke="#202020" stroke-width="1.4"/>
<line x1="44" y1="405.2" x2="58" y2="405.2" stroke="#202020" stroke-width="1.6"/>
<line x1="1032" y1="405.2" x2="1040" y2="405.2" stroke="#202020" stroke-width="1.6"/>
<line x1="47" y1="422.4" x2="55" y2="422.4" stroke="#202020" stroke-width="1.4"/>
<line x1="1036" y1="422.4" x2="1040" y2="422.4" stroke="#202020" stroke-width="1.4"/>
<line x1="47" y1="439.6" x2="55" y2="439.6" stroke="#202020" stroke-width="1.4"/>
<line x1="1036" y1="439.6" x2="1040" y2="439.6" stroke="#202020" stroke-width="1.4"/>
<line x1="47" y1="456.7" x2="55" y2="456.7" stroke="#202020" stroke-width="1.4"/>
<line x1="1036" y1="456.7" x2="1040" y2="456.7" stroke="#202020" stroke-width="1.4"/>
<line x1="47" y1="473.9" x2="55" y2="473.9" stroke="#202020" stroke-width="1.4"/>
<line x1="1036" y1="473.9" x2="1040" y2="473.9" stroke="#202020" stroke-width="1.4"/>
<line x1="44" y1="491.1" x2="58" y2="491.1" stroke="#202020" stroke-width="1.6"/>
<line x1="1032" y1="491.1" x2="1040" y2="491.1" stroke="#202020" stroke-width="1.6"/>
<line x1="47" y1="508.3" x2="55" y2="508.3" stroke="#202020" stroke-width="1.4"/>
<line x1="1036" y1="508.3" x2="1040" y2="508.3" stroke="#202020" stroke-width="1.4"/>
<line x1="47" y1="525.4" x2="55" y2="525.4" stroke="#202020" stroke-width="1.4"/>
<line x1="1036" y1="525.4" x2="1040" y2="525.4" stroke="#202020" stroke-width="1.4"/>
<line x1="47" y1="542.6" x2="55" y2="542.6" stroke="#202020" stroke-width="1.4"/>
<line x1="1036" y1="542.6" x2="1040" y2="542.6" stroke="#202020" stroke-width="1.4"/>
<line x1="47" y1="559.8" x2="55" y2="559.8" stroke="#202020" stroke-width="1.4"/>
<line x1="1036" y1="559.8" x2="1040" y2="559.8" stroke="#202020" stroke-width="1.4"/>
<line x1="44" y1="577.0" x2="58" y2="577.0" stroke="#202020" stroke-width="1.6"/>
<line x1="1032" y1="577.0" x2="1040" y2="577.0" stroke="#202020" stroke-width="1.6"/>
<line x1="47" y1="594.1" x2="55" y2="594.1" stroke="#202020" stroke-width="1.4"/>
<line x1="1036" y1="594.1" x2="1040" y2="594.1" stroke="#202020" stroke-width="1.4"/>
<line x1="47" y1="611.3" x2="55" y2="611.3" stroke="#202020" stroke-width="1.4"/>
<line x1="1036" y1="611.3" x2="1040" y2="611.3" stroke="#202020" stroke-width="1.4"/>
<line x1="47" y1="628.5" x2="55" y2="628.5" stroke="#202020" stroke-width="1.4"/>
<line x1="1036" y1="628.5" x2="1040" y2="628.5" stroke="#202020" stroke-width="1.4"/>
<line x1="47" y1="645.7" x2="55" y2="645.7" stroke="#202020" stroke-width="1.4"/>
<line x1="1036" y1="645.7" x2="1040" y2="645.7" stroke="#202020" stroke-width="1.4"/>
<line x1="44" y1="662.8" x2="58" y2="662.8" stroke="#202020" stroke-width="1.6"/>
<line x1="1032" y1="662.8" x2="1040" y2="662.8" stroke="#202020" stroke-width="1.6"/>
<line x1="47" y1="680.0" x2="55" y2="680.0" stroke="#202020" stroke-width="1.4"/>
<line x1="1036" y1="680.0" x2="1040" y2="680.0" stroke="#202020" stroke-width="1.4"/>
<line x1="47" y1="697.2" x2="55" y2="697.2" stroke="#202020" stroke-width="1.4"/>
<line x1="1036" y1="697.2" x2="1040" y2="697.2" stroke="#202020" stroke-width="1.4"/>
<line x1="47" y1="714.4" x2="55" y2="714.4" stroke="#202020" stroke-width="1.4"/>
<line x1="1036" y1="714.4" x2="1040" y2="714.4" stroke="#202020" stroke-width="1.4"/>
<line x1="47" y1="731.5" x2="55" y2="731.5" stroke="#202020" stroke-width="1.4"/>
<line x1="1036" y1="731.5" x2="1040" y2="731.5" stroke="#202020" stroke-width="1.4"/>
<line x1="44" y1="748.7" x2="58" y2="748.7" stroke="#202020" stroke-width="1.6"/>
<line x1="1032" y1="748.7" x2="1040" y2="748.7" stroke="#202020" stroke-width="1.6"/>
<line x1="51" y1="748.7" x2="51" y2="757.7" stroke="#202020" stroke-width="1.6"/>
<line x1="44" y1="147.4" x2="51" y2="147.4" stroke="#202020" stroke-width="1.6"/>
</svg>
<svg class="a" style="left:573px;top:82.5px" width="54" height="49" viewBox="0 0 54 49">
<rect x="0" y="0" width="54" height="49" fill="#fff"/>
<path d="M8.6 35.8 A24 21.5 0 0 1 36.0 2.1" fill="none" stroke="#1c2a9c" stroke-width="1.5"/>
<path d="M39.0 3.4 A24 21.5 0 0 1 50.8 25.0" fill="none" stroke="#1c2a9c" stroke-width="2"/>
<path d="M49.8 28.6 A24 21.5 0 0 1 44.0 37.2" fill="none" stroke="#1c2a9c" stroke-width="1.4"/>
<path d="M43 11 Q47.5 17 47 25" fill="none" stroke="#d01818" stroke-width="1.8"/>
<path d="M39.5 12.5 Q43 18 42.5 24" fill="none" stroke="#d01818" stroke-width="1.6"/>
<path d="M19 3.5 Q25 18 32 37 M19 3.5 Q16 20 27 33 M20.5 6 L30.5 36" fill="none" stroke="#2a3a9a" stroke-width="0.9"/>
<path d="M26 20 L36 19 L29 25" fill="none" stroke="#5060b8" stroke-width="0.9"/>
<circle cx="15.5" cy="30.5" r="2.2" fill="none" stroke="#5a6aa8" stroke-width="1"/>
<path d="M10 40 L15.5 33 L21 40" fill="none" stroke="#3a4a9a" stroke-width="0.9"/>
<path d="M9 40.5 L42 40.5" stroke="#1c2a9c" stroke-width="1.3"/>
<text x="2" y="48.5" font-family="Liberation Serif, serif" font-weight="bold" font-size="8.6" textLength="51" lengthAdjust="spacingAndGlyphs" stroke-width="0.25"><tspan fill="#c81818" stroke="#c81818">DX</tspan><tspan fill="#1c2a9c" stroke="#1c2a9c">SATCS.COM</tspan></text>
</svg>
<div class="a" style="left:1051.5px;top:97px;width:142px;height:641px;box-sizing:border-box;border:1px solid #d8d8d8;border-radius:2px"></div>
<div class="a" style="left:1056px;top:90px;width:92px;height:14px;background:#f0f0f0"></div>
<div class="t" style="left:1058.6px;top:91px;font-size:11px;color:#10109c;font-weight:normal;font-style:normal;font-family:'Liberation Sans', sans-serif;transform:scaleX(0.775);-webkit-text-stroke:0.45px #10109c;">Transponder (AU) [BS]</div>
<div class="t" style="left:1058.6px;top:119.0px;font-size:11px;color:#303030;font-weight:normal;font-style:normal;font-family:'Liberation Sans', sans-serif;transform:scaleX(0.78);-webkit-text-stroke:0.33px #303030;">Frequency:</div>
<div class="t" style="left:1120.6px;top:119.0px;font-size:11px;color:#127012;font-weight:bold;font-style:normal;font-family:'Liberation Sans', sans-serif;transform:scaleX(0.78);-webkit-text-stroke:0.33px #127012;">11090,872 MHz</div>
<div class="t" style="left:1058.6px;top:152.5px;font-size:11px;color:#303030;font-weight:normal;font-style:normal;font-family:'Liberation Sans', sans-serif;transform:scaleX(0.78);-webkit-text-stroke:0.33px #303030;">Polarization:</div>
<div class="t" style="left:1120.6px;top:152.5px;font-size:11px;color:#127012;font-weight:bold;font-style:normal;font-family:'Liberation Sans', sans-serif;transform:scaleX(0.78);-webkit-text-stroke:0.33px #127012;">Horizontal</div>
<div class="t" style="left:1058.6px;top:186.0px;font-size:11px;color:#303030;font-weight:normal;font-style:normal;font-family:'Liberation Sans', sans-serif;transform:scaleX(0.78);-webkit-text-stroke:0.33px #303030;">Symbol Rate:</div>
<div class="t" style="left:1120.6px;top:186.0px;font-size:11px;color:#127012;font-weight:bold;font-style:normal;font-family:'Liberation Sans', sans-serif;transform:scaleX(0.78);-webkit-text-stroke:0.33px #127012;">4499,47 KS/s</div>
<div class="t" style="left:1058.6px;top:219.5px;font-size:11px;color:#303030;font-weight:normal;font-style:normal;font-family:'Liberation Sans', sans-serif;transform:scaleX(0.78);-webkit-text-stroke:0.33px #303030;">Standard:</div>
<div class="t" style="left:1120.6px;top:219.5px;font-size:11px;color:#127012;font-weight:bold;font-style:normal;font-family:'Liberation Sans', sans-serif;transform:scaleX(0.78);-webkit-text-stroke:0.33px #127012;">DVB-S</div>
<div class="t" style="left:1058.6px;top:253.0px;font-size:11px;color:#303030;font-weight:normal;font-style:normal;font-family:'Liberation Sans', sans-serif;transform:scaleX(0.78);-webkit-text-stroke:0.33px #303030;">Modulation:</div>
<div class="t" style="left:1120.6px;top:253.0px;font-size:11px;color:#127012;font-weight:bold;font-style:normal;font-family:'Liberation Sans', sans-serif;transform:scaleX(0.78);-webkit-text-stroke:0.33px #127012;">QPSK</div>
<div class="t" style="left:1058.6px;top:286.5px;font-size:11px;color:#303030;font-weight:normal;font-style:normal;font-family:'Liberation Sans', sans-serif;transform:scaleX(0.78);-webkit-text-stroke:0.33px #303030;">FEC:</div>
<div class="t" style="left:1120.6px;top:286.5px;font-size:11px;color:#127012;font-weight:bold;font-style:normal;font-family:'Liberation Sans', sans-serif;transform:scaleX(0.78);-webkit-text-stroke:0.33px #127012;">1/2</div>
<div class="t" style="left:1058.6px;top:320.0px;font-size:11px;color:#303030;font-weight:normal;font-style:normal;font-family:'Liberation Sans', sans-serif;transform:scaleX(0.78);-webkit-text-stroke:0.33px #303030;">RollOff:</div>
<div class="t" style="left:1120.6px;top:320.0px;font-size:11px;color:#127012;font-weight:bold;font-style:normal;font-family:'Liberation Sans', sans-serif;transform:scaleX(0.78);-webkit-text-stroke:0.33px #127012;">0.35</div>
<div class="t" style="left:1058.6px;top:353.5px;font-size:11px;color:#303030;font-weight:normal;font-style:normal;font-family:'Liberation Sans', sans-serif;transform:scaleX(0.78);-webkit-text-stroke:0.33px #303030;">Pilot:</div>
<div class="t" style="left:1120.6px;top:353.5px;font-size:11px;color:#303030;font-weight:normal;font-style:normal;font-family:'Liberation Sans', sans-serif;transform:scaleX(0.78);-webkit-text-stroke:0.33px #303030;">OFF</div>
<div class="t" style="left:1058.6px;top:387.0px;font-size:11px;color:#303030;font-weight:normal;font-style:normal;font-family:'Liberation Sans', sans-serif;transform:scaleX(0.78);-webkit-text-stroke:0.33px #303030;">Spectrum:</div>
<div class="t" style="left:1120.6px;top:387.0px;font-size:11px;color:#127012;font-weight:bold;font-style:normal;font-family:'Liberation Sans', sans-serif;transform:scaleX(0.78);-webkit-text-stroke:0.33px #127012;">Inverted</div>
<div class="t" style="left:1058.6px;top:420.5px;font-size:11px;color:#303030;font-weight:normal;font-style:normal;font-family:'Liberation Sans', sans-serif;transform:scaleX(0.78);-webkit-text-stroke:0.33px #303030;">Frame Type:</div>
<div class="t" style="left:1120.6px;top:420.5px;font-size:11px;color:#303030;font-weight:normal;font-style:normal;font-family:'Liberation Sans', sans-serif;transform:scaleX(0.78);-webkit-text-stroke:0.33px #303030;">Long Frame</div>
<div class="t" style="left:1058.6px;top:454.0px;font-size:11px;color:#303030;font-weight:normal;font-style:normal;font-family:'Liberation Sans', sans-serif;transform:scaleX(0.78);-webkit-text-stroke:0.33px #303030;">Code Mode:</div>
<div class="t" style="left:1120.6px;top:454.0px;font-size:11px;color:#303030;font-weight:normal;font-style:normal;font-family:'Liberation Sans', sans-serif;transform:scaleX(0.78);-webkit-text-stroke:0.33px #303030;">CCM</div>
<div class="t" style="left:1058.6px;top:487.5px;font-size:11px;color:#303030;font-weight:normal;font-style:normal;font-family:'Liberation Sans', sans-serif;transform:scaleX(0.78);-webkit-text-stroke:0.33px #303030;">Stream type:</div>
<div class="t" style="left:1120.6px;top:487.5px;font-size:11px;color:#303030;font-weight:normal;font-style:normal;font-family:'Liberation Sans', sans-serif;transform:scaleX(0.78);-webkit-text-stroke:0.33px #303030;">Transport</div>
<div class="t" style="left:1058.6px;top:521.0px;font-size:11px;color:#303030;font-weight:normal;font-style:normal;font-family:'Liberation Sans', sans-serif;transform:scaleX(0.78);-webkit-text-stroke:0.33px #303030;">ISSYI</div>
<div class="t" style="left:1120.6px;top:521.0px;font-size:11px;color:#303030;font-weight:normal;font-style:normal;font-family:'Liberation Sans', sans-serif;transform:scaleX(0.78);-webkit-text-stroke:0.33px #303030;">OFF</div>
<div class="t" style="left:1058.6px;top:554.5px;font-size:11px;color:#303030;font-weight:normal;font-style:normal;font-family:'Liberation Sans', sans-serif;transform:scaleX(0.78);-webkit-text-stroke:0.33px #303030;">NPD:</div>
<div class="t" style="left:1120.6px;top:554.5px;font-size:11px;color:#303030;font-weight:normal;font-style:normal;font-family:'Liberation Sans', sans-serif;transform:scaleX(0.78);-webkit-text-stroke:0.33px #303030;">OFF</div>
<div class="t" style="left:1058.6px;top:588.0px;font-size:11px;color:#303030;font-weight:normal;font-style:normal;font-family:'Liberation Sans', sans-serif;transform:scaleX(0.78);-webkit-text-stroke:0.33px #303030;">RF Level:</div>
<div class="t" style="left:1120.6px;top:588.0px;font-size:11px;color:#127012;font-weight:bold;font-style:normal;font-family:'Liberation Sans', sans-serif;transform:scaleX(0.78);-webkit-text-stroke:0.33px #127012;">-47 dBm</div>
<div class="t" style="left:1058.6px;top:621.5px;font-size:11px;color:#303030;font-weight:normal;font-style:normal;font-family:'Liberation Sans', sans-serif;transform:scaleX(0.78);-webkit-text-stroke:0.33px #303030;">BitRate:</div>
<div class="t" style="left:1120.6px;top:621.5px;font-size:11px;color:#127012;font-weight:bold;font-style:normal;font-family:'Liberation Sans', sans-serif;transform:scaleX(0.78);-webkit-text-stroke:0.33px #127012;">3,946 Mbit/s</div>
<div class="t" style="left:1058.6px;top:655.0px;font-size:11px;color:#303030;font-weight:normal;font-style:normal;font-family:'Liberation Sans', sans-serif;transform:scaleX(0.78);-webkit-text-stroke:0.33px #303030;">CarrierWidth:</div>
<div class="t" style="left:1120.6px;top:655.0px;font-size:11px;color:#127012;font-weight:bold;font-style:normal;font-family:'Liberation Sans', sans-serif;transform:scaleX(0.78);-webkit-text-stroke:0.33px #127012;">6,073 MHz</div>
<div class="t" style="left:1058.6px;top:700px;font-size:11px;color:#303030;font-weight:normal;font-style:normal;font-family:'Liberation Sans', sans-serif;transform:scaleX(0.78);-webkit-text-stroke:0.33px #303030;">MIS (0):</div>
<div class="a" style="left:1120.5px;top:695px;width:57.5px;height:19px;background:#fff;box-sizing:border-box;border:1px solid #e6e6e6"></div>
<div class="t" style="left:1123.5px;top:700.5px;font-size:11px;color:#333;font-weight:normal;font-style:normal;font-family:'Liberation Sans', sans-serif;transform:scaleX(0.8);-webkit-text-stroke:0.33px #333;">Single</div>
<svg class="a" style="left:1165px;top:702px" width="8" height="5" viewBox="0 0 8 5"><path d="M0.5 0.5 L4 4 L7.5 0.5" fill="none" stroke="#777" stroke-width="0.9"/></svg>
<div class="a" style="left:1052.5px;top:745px;width:140px;height:25.5px;background:#fff;box-sizing:border-box;border:1px solid #d4d4d4;border-bottom-color:#bdbdbd;border-radius:4px"></div>
<svg class="a" style="left:1116px;top:750px" width="14" height="16" viewBox="0 0 14 16">
<rect x="0.5" y="0.5" width="13" height="15" rx="1" fill="#e8e8e8" stroke="#888" stroke-width="0.8"/>
<rect x="1" y="5" width="12" height="3" fill="#2a6ad8"/>
<line x1="1" y1="11" x2="13" y2="11" stroke="#999" stroke-width="0.8"/>
</svg>
<div class="a" style="left:9.7px;top:781.3px;width:98px;height:19px;box-sizing:border-box;border:1px solid #a8a8a8;border-radius:2px;background:linear-gradient(#f0fdf0 0%,#d8f8d8 52%,#5acb5a 58%,#6cdc6c 85%,#84f284 100%)"></div>
<div class="t" style="left:11.7px;top:787.0px;font-size:11.5px;color:#000;font-weight:normal;font-style:normal;font-family:'Liberation Sans', sans-serif;transform:scaleX(0.7488);-webkit-text-stroke:0.45px #000;">Present</div>
<div class="a" style="left:9.7px;top:804.7px;width:98px;height:19px;box-sizing:border-box;border:1px solid #a8a8a8;border-radius:2px;background:linear-gradient(#f0fdf0 0%,#d8f8d8 52%,#5acb5a 58%,#6cdc6c 85%,#84f284 100%)"></div>
<div class="t" style="left:11.7px;top:810.4000000000001px;font-size:11.5px;color:#000;font-weight:normal;font-style:normal;font-family:'Liberation Sans', sans-serif;transform:scaleX(0.7488);-webkit-text-stroke:0.45px #000;">Lock</div>
<div class="a" style="left:111px;top:781.3px;width:487px;height:19px;box-sizing:border-box;border:1px solid #a8a8a8;border-radius:2px;background:linear-gradient(#f4f4f4 0%,#e8e8e8 48%,#c4c4c4 55%,#d8d8d8 100%)"></div>
<div class="a" style="left:112px;top:782.3px;width:48px;height:17px;background:linear-gradient(#fff4f4 0%,#fbe4e4 48%,#e8a0a0 55%,#f4b4b4 100%)"></div>
<div class="a" style="left:160px;top:782.3px;width:35.19999999999999px;height:17px;background:linear-gradient(#ffffe8 0%,#fffcd8 48%,#dcd460 55%,#f0ea80 100%)"></div>
<div class="t" style="left:115px;top:787.0px;font-size:11.5px;color:#000;font-weight:normal;font-style:normal;font-family:'Liberation Sans', sans-serif;transform:scaleX(0.74);-webkit-text-stroke:0.4px #000;">Level: 17%</div>
<div class="a" style="left:111px;top:804.7px;width:487px;height:19px;box-sizing:border-box;border:1px solid #a8a8a8;border-radius:2px;background:linear-gradient(#f4f4f4 0%,#e8e8e8 48%,#c4c4c4 55%,#d8d8d8 100%)"></div>
<div class="a" style="left:112px;top:805.7px;width:48px;height:17px;background:linear-gradient(#fff4f4 0%,#fbe4e4 48%,#e8a0a0 55%,#f4b4b4 100%)"></div>
<div class="a" style="left:160px;top:805.7px;width:146.5px;height:17px;background:linear-gradient(#ffffe8 0%,#fffcd8 48%,#dcd460 55%,#f0ea80 100%)"></div>
<div class="t" style="left:115px;top:810.4000000000001px;font-size:11.5px;color:#000;font-weight:normal;font-style:normal;font-family:'Liberation Sans', sans-serif;transform:scaleX(0.74);-webkit-text-stroke:0.4px #000;">Quality: 40%</div>
<div class="a" style="left:602.7px;top:781.3px;width:240.5px;height:19px;box-sizing:border-box;border:1px solid #a8a8a8;border-radius:2px;background:linear-gradient(#f4f4f4 0%,#e8e8e8 48%,#c4c4c4 55%,#d8d8d8 100%)"></div>
<div class="a" style="left:603.7px;top:782.3px;width:17.199999999999932px;height:17px;background:linear-gradient(#fff4f4 0%,#fbe4e4 48%,#e8a0a0 55%,#f4b4b4 100%)"></div>
<div class="t" style="left:606.7px;top:787.0px;font-size:11.5px;color:#000;font-weight:normal;font-style:normal;font-family:'Liberation Sans', sans-serif;transform:scaleX(0.74);-webkit-text-stroke:0.4px #000;">preBER: 6,6E-1</div>
<div class="a" style="left:602.7px;top:804.7px;width:488px;height:19px;box-sizing:border-box;border:1px solid #a8a8a8;border-radius:2px;background:linear-gradient(#f4f4f4 0%,#e8e8e8 48%,#c4c4c4 55%,#d8d8d8 100%)"></div>
<div class="a" style="left:603.7px;top:805.7px;width:65.19999999999993px;height:17px;background:linear-gradient(#fff4f4 0%,#fbe4e4 48%,#e8a0a0 55%,#f4b4b4 100%)"></div>
<div class="a" style="left:668.9px;top:805.7px;width:19.899999999999977px;height:17px;background:linear-gradient(#ffffe8 0%,#fffcd8 48%,#dcd460 55%,#f0ea80 100%)"></div>
<div class="t" style="left:607.0px;top:810.4000000000001px;font-size:11.5px;color:#000;font-weight:normal;font-style:normal;font-family:'Liberation Sans', sans-serif;transform:scaleX(0.785);-webkit-text-stroke:0.4px #000;">SNR: 3,5 dB (Margin: 0,8 dB | Very Poor)</div>
<div class="a" style="left:847.7px;top:781.3px;width:243px;height:19px;box-sizing:border-box;border:1px solid #a8a8a8;border-radius:2px;background:linear-gradient(#f4f4f4 0%,#e8e8e8 48%,#c4c4c4 55%,#d8d8d8 100%)"></div>
<div class="a" style="left:848.7px;top:782.3px;width:51.299999999999955px;height:17px;background:linear-gradient(#fff4f4 0%,#fbe4e4 48%,#e8a0a0 55%,#f4b4b4 100%)"></div>
<div class="a" style="left:900px;top:782.3px;width:18px;height:17px;background:linear-gradient(#ffffe8 0%,#fffcd8 48%,#dcd460 55%,#f0ea80 100%)"></div>
<div class="t" style="left:851.7px;top:787.0px;font-size:11.5px;color:#000;font-weight:normal;font-style:normal;font-family:'Liberation Sans', sans-serif;transform:scaleX(0.74);-webkit-text-stroke:0.4px #000;">BER: 1,3E-2</div>
<div class="a" style="left:1094.3px;top:781.3px;width:97.3px;height:19px;box-sizing:border-box;border:1px solid #a8a8a8;border-radius:2px;background:linear-gradient(#f0fdf0 0%,#d8f8d8 52%,#5acb5a 58%,#6cdc6c 85%,#84f284 100%)"></div>
<div class="t" style="left:1096.3px;top:787.0px;font-size:11.5px;color:#000;font-weight:normal;font-style:normal;font-family:'Liberation Sans', sans-serif;transform:scaleX(0.8111999999999999);-webkit-text-stroke:0.45px #000;">Input (~3,99 Mbps)</div>
<div class="a" style="left:1094.3px;top:804.7px;width:97.3px;height:19px;box-sizing:border-box;border:1px solid #a8a8a8;border-radius:2px;background:linear-gradient(#f0fdf0 0%,#d8f8d8 52%,#5acb5a 58%,#6cdc6c 85%,#84f284 100%)"></div>
<div class="t" style="left:1096.3px;top:810.4000000000001px;font-size:11.5px;color:#000;font-weight:normal;font-style:normal;font-family:'Liberation Sans', sans-serif;transform:scaleX(0.7488);-webkit-text-stroke:0.45px #000;">Sync TS</div>
<div class="a" style="left:0;top:830px;width:1200px;height:1px;background:#d8d8d8"></div>
<div class="a" style="left:0;top:831px;width:1200px;height:19px;background:#f0f0f0"></div>
<div class="a" style="left:393.5px;top:833px;width:1px;height:17px;background:#a0a0a0"></div>
<div class="a" style="left:792px;top:833px;width:1px;height:17px;background:#a0a0a0"></div>
<div class="a" style="left:1188px;top:833px;width:1px;height:17px;background:#a0a0a0"></div>
<div class="t" style="left:198.5px;top:837.2px;font-size:12.2px;font-weight:bold;color:#111;transform:translateX(-50%) scaleX(0.722);transform-origin:50% 0">Locked -&gt; Uptime: 57:27:17</div>
<div class="t" style="left:595px;top:837.2px;font-size:12.2px;font-weight:bold;color:#111;transform:translateX(-50%) scaleX(0.722);transform-origin:50% 0">SYNC 2 | TEI 327 | CC 2638</div>
<div class="t" style="left:990.7px;top:837.2px;font-size:12.2px;font-weight:bold;color:#111;transform:translateX(-50%) scaleX(0.745);transform-origin:50% 0">Best signal: 6,9 dB (2024-06-03 00:13)</div>
<svg class="a" style="left:1186.5px;top:838px" width="14" height="12" viewBox="0 0 14 12"><g fill="#8a8a8a"><rect x="10.3" y="3.5" width="1.8" height="2"/><rect x="7.2" y="7.3" width="1.8" height="2"/><rect x="10.3" y="7.3" width="1.8" height="2"/><rect x="4.1" y="11" width="1.8" height="2"/><rect x="7.2" y="11" width="1.8" height="2"/><rect x="10.3" y="11" width="1.8" height="2"/></g></svg>
</body></html>
